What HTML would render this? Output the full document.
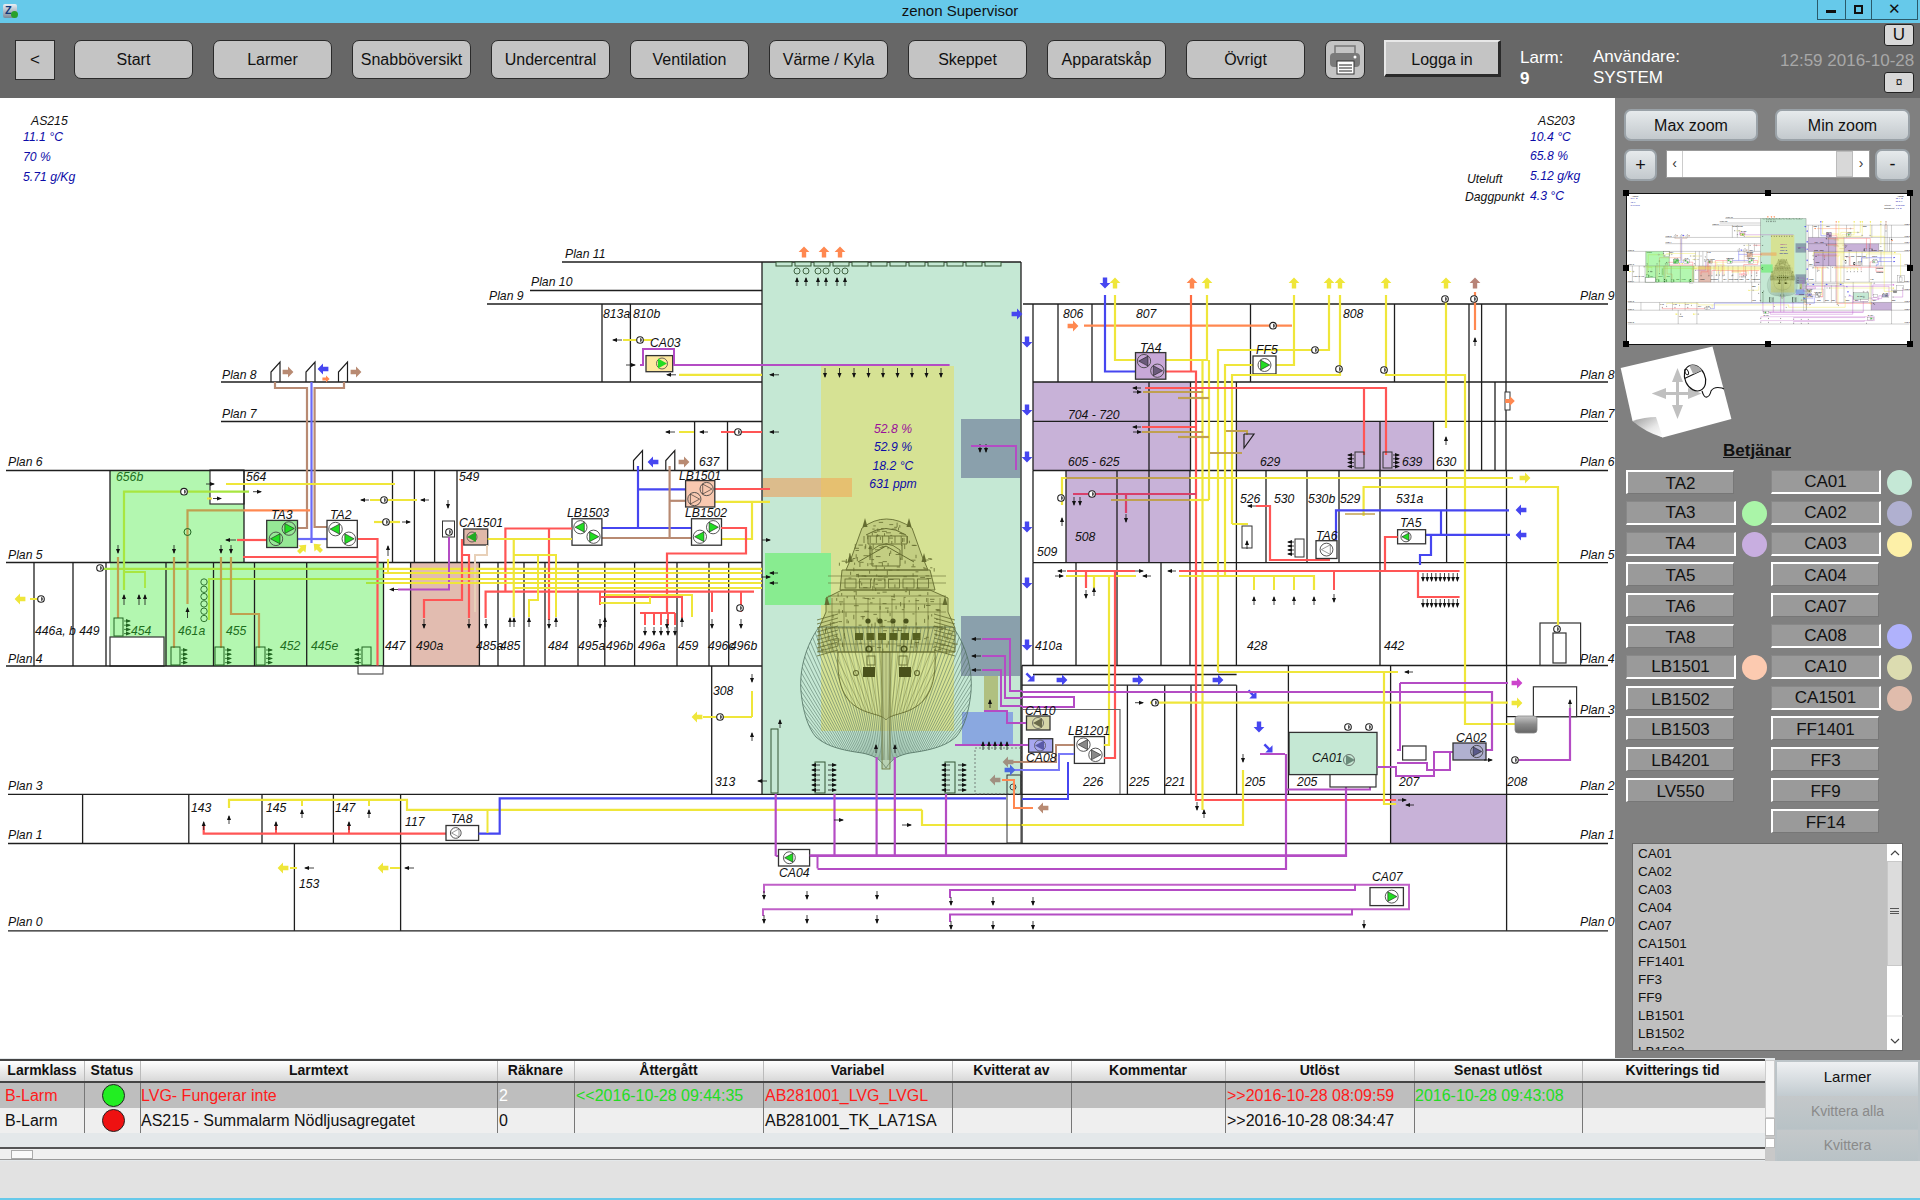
<!DOCTYPE html><html><head><meta charset="utf-8"><style>
*{margin:0;padding:0;box-sizing:border-box}
html,body{width:1920px;height:1200px;overflow:hidden;background:#fff;font-family:"Liberation Sans", sans-serif}
.a{position:absolute}
.tb{position:absolute;left:0;top:0;width:1920px;height:23px;background:#66c9ea}
.title{position:absolute;left:0;width:1920px;top:2px;text-align:center;font-size:15px;color:#111}
.tool{position:absolute;left:0;top:23px;width:1920px;height:75px;background:#676767}
.nb{position:absolute;top:40px;width:119px;height:39px;background:#c4c4c4;border:1px solid #2a2a2a;border-radius:7px;font-size:16px;color:#111;text-align:center;line-height:38px}
.panel{position:absolute;left:1615px;top:98px;width:305px;height:962px;background:#808080}
.sb{position:absolute;width:108px;height:24px;background:#9a9a9a;font-size:17px;color:#111;text-align:center;line-height:23px;border-top:2px solid #fff;border-left:2px solid #fff;border-bottom:1px solid #777;border-right:1px solid #777}
.sb2{position:absolute;width:108px;height:24px;background:#9a9a9a;font-size:17px;color:#111;text-align:center;line-height:22px;border-bottom:2px solid #fff;border-right:2px solid #fff;border-top:1px solid #888;border-left:1px solid #888}
.dot{position:absolute;width:25px;height:25px;border-radius:50%}
.zb{position:absolute;height:32px;border-radius:7px;background:linear-gradient(#e6eaec,#c3c9cd);border:2px solid #9aa2a8;font-size:16px;color:#111;text-align:center;line-height:30px}
</style></head><body><div class="tb"><div class="title">zenon Supervisor</div></div>
<div class="a" style="left:3px;top:4px;width:14px;height:14px;border-radius:2px;background:linear-gradient(#e8eef4,#7a8a9a);"></div>
<div class="a" style="left:5px;top:4px;font-size:11px;font-weight:bold;color:#123a7a;">Z</div>
<div class="a" style="left:11px;top:11px;width:7px;height:7px;border-radius:50%;background:#2aa02a;"></div>
<div class="a" style="left:1817px;top:0;width:29px;height:20px;border:1px solid #2a5a6a;border-top:none;"></div>
<div class="a" style="left:1826px;top:10px;width:10px;height:3px;background:#111;"></div>
<div class="a" style="left:1845px;top:0;width:27px;height:20px;border:1px solid #2a5a6a;border-top:none;"></div>
<div class="a" style="left:1854px;top:5px;width:9px;height:9px;border:2px solid #111;"></div>
<div class="a" style="left:1871px;top:0;width:47px;height:20px;border:1px solid #2a5a6a;border-top:none;font-size:15px;text-align:center;line-height:18px;color:#111">&#x2715;</div>
<div class="tool"></div>
<div class="a" style="left:15px;top:40px;width:40px;height:40px;background:#c4c4c4;border:1px solid #2a2a2a;font-size:17px;text-align:center;line-height:38px;color:#111">&lt;</div>
<div class="nb" style="left:74px">Start</div>
<div class="nb" style="left:213px">Larmer</div>
<div class="nb" style="left:352px">Snabböversikt</div>
<div class="nb" style="left:491px">Undercentral</div>
<div class="nb" style="left:630px">Ventilation</div>
<div class="nb" style="left:769px">Värme / Kyla</div>
<div class="nb" style="left:908px">Skeppet</div>
<div class="nb" style="left:1047px">Apparatskåp</div>
<div class="nb" style="left:1186px">Övrigt</div>
<div class="nb" style="left:1325px;width:40px;"></div>
<svg class="a" style="left:1325px;top:40px" width="40" height="40"><rect x="10" y="6" width="20" height="8" fill="none" stroke="#777" stroke-width="1.5"/><rect x="5" y="13" width="30" height="14" rx="4" fill="#7a7a7a"/><circle cx="30" cy="17" r="1.5" fill="#fff"/><rect x="12" y="21" width="17" height="13" fill="#fff" stroke="#333" stroke-width="1"/><line x1="14" y1="25" x2="27" y2="25" stroke="#222"/><line x1="14" y1="28" x2="27" y2="28" stroke="#222"/><line x1="14" y1="31" x2="27" y2="31" stroke="#222"/></svg>
<div class="a" style="left:1384px;top:40px;width:117px;height:37px;background:#c4c4c4;border-top:2px solid #e8e8e8;border-left:2px solid #e8e8e8;border-bottom:3px solid #2a2a2a;border-right:3px solid #2a2a2a;font-size:16px;text-align:center;line-height:35px;color:#111">Logga in</div>
<div class="a" style="left:1520px;top:47px;font-size:17px;color:#fff;line-height:21px">Larm:<br><b>9</b></div>
<div class="a" style="left:1593px;top:46px;font-size:17px;color:#fff;line-height:21px">Användare:<br>SYSTEM</div>
<div class="a" style="left:1780px;top:51px;font-size:17px;color:#a8a8a8">12:59 2016-10-28</div>
<div class="a" style="left:1884px;top:24px;width:30px;height:22px;background:#d8d8d8;border:1px solid #222;border-radius:3px;font-size:17px;text-align:center;line-height:20px;color:#111">U</div>
<div class="a" style="left:1884px;top:72px;width:30px;height:21px;background:#d8d8d8;border:1px solid #222;border-radius:3px;font-size:12px;text-align:center;line-height:19px;color:#111">&#xa4;</div><div class="a" style="left:0;top:98px;width:1615px;height:962px;background:#fff"></div><svg class="a" style="left:0;top:0" width="1615" height="1058" viewBox="0 0 1615 1058" font-family='"Liberation Sans", sans-serif'><g id="dg"><rect x="762" y="262" width="259" height="532" fill="#c5e8d4" stroke="none" stroke-width="1.3"/>
<rect x="821" y="366" width="133" height="365" fill="#d6e294" stroke="none" stroke-width="1.3"/>
<rect x="110" y="470" width="134" height="92.5" fill="#b3f7b0" stroke="none" stroke-width="1.3"/>
<rect x="110" y="562.5" width="274" height="103.5" fill="#b3f7b0" stroke="none" stroke-width="1.3"/>
<rect x="110" y="637" width="54" height="29" fill="#fff" stroke="#333" stroke-width="1.2"/>
<rect x="210" y="470" width="34" height="34" fill="#fff" stroke="#333" stroke-width="1.2"/>
<rect x="410.6" y="562.5" width="68.79999999999995" height="103.5" fill="#e2bcb0" stroke="none" stroke-width="1.3"/>
<rect x="763" y="478" width="89" height="19" fill="#dcbc8c" stroke="none" stroke-width="1.3"/>
<rect x="821" y="478" width="31" height="19" fill="#e6c070" stroke="none" stroke-width="1.3"/>
<rect x="765" y="553" width="66" height="52" fill="#88ec90" stroke="none" stroke-width="1.3"/>
<rect x="961" y="419" width="59" height="59" fill="#8aa0ac" stroke="none" stroke-width="1.3"/>
<rect x="961" y="616" width="59" height="60" fill="#8aa0ac" stroke="none" stroke-width="1.3"/>
<rect x="984" y="676" width="14" height="35" fill="#b0c080" stroke="none" stroke-width="1.3"/>
<rect x="962" y="712" width="51" height="33" fill="#8aa8e0" stroke="none" stroke-width="1.3"/>
<rect x="1033" y="382" width="157.5" height="88.5" fill="#c8b2d8" stroke="none" stroke-width="1.3"/>
<rect x="1066" y="470.5" width="124" height="92.20000000000005" fill="#c8b2d8" stroke="none" stroke-width="1.3"/>
<rect x="1236.4" y="421.4" width="197.0999999999999" height="49.10000000000002" fill="#c8b2d8" stroke="none" stroke-width="1.3"/>
<rect x="1390.6" y="794" width="116.0" height="49.60000000000002" fill="#c8b2d8" stroke="none" stroke-width="1.3"/>
<rect x="1289" y="732.4" width="88" height="42.200000000000045" fill="#c5e8d4" stroke="#333" stroke-width="1.3"/>
<line x1="562" y1="262" x2="762" y2="262" stroke="#1e1e1e" stroke-width="1.3"/>
<line x1="530" y1="290.5" x2="762" y2="290.5" stroke="#1e1e1e" stroke-width="1.3"/>
<line x1="487" y1="304" x2="762" y2="304" stroke="#1e1e1e" stroke-width="1.3"/>
<line x1="1023" y1="304" x2="1608" y2="304" stroke="#1e1e1e" stroke-width="1.3"/>
<line x1="221" y1="382" x2="762" y2="382" stroke="#1e1e1e" stroke-width="1.3"/>
<line x1="1033" y1="382" x2="1608" y2="382" stroke="#1e1e1e" stroke-width="1.3"/>
<line x1="221" y1="421.5" x2="762" y2="421.5" stroke="#1e1e1e" stroke-width="1.3"/>
<line x1="1033" y1="421.4" x2="1608" y2="421.4" stroke="#1e1e1e" stroke-width="1.3"/>
<line x1="6" y1="470.5" x2="762" y2="470.5" stroke="#1e1e1e" stroke-width="1.3"/>
<line x1="1033" y1="470.5" x2="1608" y2="470.5" stroke="#1e1e1e" stroke-width="1.3"/>
<line x1="6" y1="562.5" x2="762" y2="562.5" stroke="#1e1e1e" stroke-width="1.3"/>
<line x1="1033" y1="562.7" x2="1608" y2="562.7" stroke="#1e1e1e" stroke-width="1.3"/>
<line x1="6" y1="666" x2="762" y2="666" stroke="#1e1e1e" stroke-width="1.3"/>
<line x1="1022" y1="665.5" x2="1608" y2="665.5" stroke="#1e1e1e" stroke-width="1.3"/>
<line x1="1033" y1="674.5" x2="1236.6" y2="674.5" stroke="#1e1e1e" stroke-width="1.3"/>
<line x1="1022" y1="685.2" x2="1236.6" y2="685.2" stroke="#1e1e1e" stroke-width="1.3"/>
<line x1="8" y1="794.3" x2="1608" y2="794.3" stroke="#1e1e1e" stroke-width="1.3"/>
<line x1="1506" y1="716.7" x2="1610" y2="716.7" stroke="#1e1e1e" stroke-width="1.3"/>
<line x1="8" y1="843.5" x2="1608" y2="843.5" stroke="#1e1e1e" stroke-width="1.3"/>
<line x1="8" y1="930.8" x2="1608" y2="930.8" stroke="#1e1e1e" stroke-width="1.3"/>
<line x1="762" y1="262" x2="762" y2="794" stroke="#1e1e1e" stroke-width="1.3"/>
<line x1="1021" y1="262" x2="1021" y2="794" stroke="#1e1e1e" stroke-width="1.3"/>
<line x1="762" y1="262" x2="1021" y2="262" stroke="#1e1e1e" stroke-width="1.3"/>
<text transform="translate(565,258) scale(0.94,1)" font-size="13" fill="#111" font-style="italic" text-anchor="start" font-weight="normal">Plan 11</text>
<text transform="translate(531,286) scale(0.94,1)" font-size="13" fill="#111" font-style="italic" text-anchor="start" font-weight="normal">Plan 10</text>
<text transform="translate(489,300) scale(0.94,1)" font-size="13" fill="#111" font-style="italic" text-anchor="start" font-weight="normal">Plan 9</text>
<text transform="translate(222,379) scale(0.94,1)" font-size="13" fill="#111" font-style="italic" text-anchor="start" font-weight="normal">Plan 8</text>
<text transform="translate(222,418) scale(0.94,1)" font-size="13" fill="#111" font-style="italic" text-anchor="start" font-weight="normal">Plan 7</text>
<text transform="translate(8,466) scale(0.94,1)" font-size="13" fill="#111" font-style="italic" text-anchor="start" font-weight="normal">Plan 6</text>
<text transform="translate(8,559) scale(0.94,1)" font-size="13" fill="#111" font-style="italic" text-anchor="start" font-weight="normal">Plan 5</text>
<text transform="translate(8,663) scale(0.94,1)" font-size="13" fill="#111" font-style="italic" text-anchor="start" font-weight="normal">Plan 4</text>
<text transform="translate(8,790) scale(0.94,1)" font-size="13" fill="#111" font-style="italic" text-anchor="start" font-weight="normal">Plan 3</text>
<text transform="translate(8,839) scale(0.94,1)" font-size="13" fill="#111" font-style="italic" text-anchor="start" font-weight="normal">Plan 1</text>
<text transform="translate(8,926) scale(0.94,1)" font-size="13" fill="#111" font-style="italic" text-anchor="start" font-weight="normal">Plan 0</text>
<text transform="translate(1580,300) scale(0.94,1)" font-size="13" fill="#111" font-style="italic" text-anchor="start" font-weight="normal">Plan 9</text>
<text transform="translate(1580,379) scale(0.94,1)" font-size="13" fill="#111" font-style="italic" text-anchor="start" font-weight="normal">Plan 8</text>
<text transform="translate(1580,418) scale(0.94,1)" font-size="13" fill="#111" font-style="italic" text-anchor="start" font-weight="normal">Plan 7</text>
<text transform="translate(1580,466) scale(0.94,1)" font-size="13" fill="#111" font-style="italic" text-anchor="start" font-weight="normal">Plan 6</text>
<text transform="translate(1580,559) scale(0.94,1)" font-size="13" fill="#111" font-style="italic" text-anchor="start" font-weight="normal">Plan 5</text>
<text transform="translate(1580,663) scale(0.94,1)" font-size="13" fill="#111" font-style="italic" text-anchor="start" font-weight="normal">Plan 4</text>
<text transform="translate(1580,714) scale(0.94,1)" font-size="13" fill="#111" font-style="italic" text-anchor="start" font-weight="normal">Plan 3</text>
<text transform="translate(1580,790) scale(0.94,1)" font-size="13" fill="#111" font-style="italic" text-anchor="start" font-weight="normal">Plan 2</text>
<text transform="translate(1580,839) scale(0.94,1)" font-size="13" fill="#111" font-style="italic" text-anchor="start" font-weight="normal">Plan 1</text>
<text transform="translate(1580,926) scale(0.94,1)" font-size="13" fill="#111" font-style="italic" text-anchor="start" font-weight="normal">Plan 0</text>
<line x1="110" y1="470.5" x2="110" y2="562.5" stroke="#1e1e1e" stroke-width="1.3"/>
<line x1="244" y1="470.5" x2="244" y2="562.5" stroke="#1e1e1e" stroke-width="1.3"/>
<line x1="392.5" y1="470.5" x2="392.5" y2="562.5" stroke="#1e1e1e" stroke-width="1.3"/>
<line x1="414.4" y1="470.5" x2="414.4" y2="562.5" stroke="#1e1e1e" stroke-width="1.3"/>
<line x1="434.6" y1="470.5" x2="434.6" y2="562.5" stroke="#1e1e1e" stroke-width="1.3"/>
<line x1="457" y1="470.5" x2="457" y2="562.5" stroke="#1e1e1e" stroke-width="1.3"/>
<line x1="34" y1="562.5" x2="34" y2="666" stroke="#1e1e1e" stroke-width="1.3"/>
<line x1="73" y1="562.5" x2="73" y2="666" stroke="#1e1e1e" stroke-width="1.3"/>
<line x1="106" y1="562.5" x2="106" y2="666" stroke="#1e1e1e" stroke-width="1.3"/>
<line x1="166" y1="562.5" x2="166" y2="666" stroke="#1e1e1e" stroke-width="1.3"/>
<line x1="213.5" y1="562.5" x2="213.5" y2="666" stroke="#1e1e1e" stroke-width="1.3"/>
<line x1="254.5" y1="562.5" x2="254.5" y2="666" stroke="#1e1e1e" stroke-width="1.3"/>
<line x1="306.7" y1="562.5" x2="306.7" y2="666" stroke="#1e1e1e" stroke-width="1.3"/>
<line x1="383.5" y1="562.5" x2="383.5" y2="666" stroke="#1e1e1e" stroke-width="1.3"/>
<line x1="410.6" y1="562.5" x2="410.6" y2="666" stroke="#1e1e1e" stroke-width="1.3"/>
<line x1="479.4" y1="562.5" x2="479.4" y2="666" stroke="#1e1e1e" stroke-width="1.3"/>
<line x1="498" y1="562.5" x2="498" y2="666" stroke="#1e1e1e" stroke-width="1.3"/>
<line x1="524" y1="562.5" x2="524" y2="666" stroke="#1e1e1e" stroke-width="1.3"/>
<line x1="545" y1="562.5" x2="545" y2="666" stroke="#1e1e1e" stroke-width="1.3"/>
<line x1="578" y1="562.5" x2="578" y2="666" stroke="#1e1e1e" stroke-width="1.3"/>
<line x1="604.8" y1="562.5" x2="604.8" y2="666" stroke="#1e1e1e" stroke-width="1.3"/>
<line x1="634.6" y1="562.5" x2="634.6" y2="666" stroke="#1e1e1e" stroke-width="1.3"/>
<line x1="677" y1="562.5" x2="677" y2="666" stroke="#1e1e1e" stroke-width="1.3"/>
<line x1="709" y1="562.5" x2="709" y2="666" stroke="#1e1e1e" stroke-width="1.3"/>
<line x1="728.7" y1="562.5" x2="728.7" y2="666" stroke="#1e1e1e" stroke-width="1.3"/>
<line x1="711.7" y1="666" x2="711.7" y2="794" stroke="#1e1e1e" stroke-width="1.3"/>
<line x1="602" y1="304" x2="602" y2="382" stroke="#1e1e1e" stroke-width="1.3"/>
<line x1="630.4" y1="304" x2="630.4" y2="382" stroke="#1e1e1e" stroke-width="1.3"/>
<line x1="694.6" y1="421.5" x2="694.6" y2="470.5" stroke="#1e1e1e" stroke-width="1.3"/>
<line x1="727.5" y1="421.5" x2="727.5" y2="470.5" stroke="#1e1e1e" stroke-width="1.3"/>
<line x1="82.6" y1="794.3" x2="82.6" y2="843.5" stroke="#1e1e1e" stroke-width="1.3"/>
<line x1="188.8" y1="794.3" x2="188.8" y2="843.5" stroke="#1e1e1e" stroke-width="1.3"/>
<line x1="262" y1="794.3" x2="262" y2="843.5" stroke="#1e1e1e" stroke-width="1.3"/>
<line x1="333.4" y1="794.3" x2="333.4" y2="843.5" stroke="#1e1e1e" stroke-width="1.3"/>
<line x1="400.6" y1="794.3" x2="400.6" y2="843.5" stroke="#1e1e1e" stroke-width="1.3"/>
<line x1="294.4" y1="843.5" x2="294.4" y2="930.8" stroke="#1e1e1e" stroke-width="1.3"/>
<line x1="400.6" y1="843.5" x2="400.6" y2="930.8" stroke="#1e1e1e" stroke-width="1.3"/>
<line x1="1033" y1="304" x2="1033" y2="382" stroke="#1e1e1e" stroke-width="1.3"/>
<line x1="1058" y1="304" x2="1058" y2="382" stroke="#1e1e1e" stroke-width="1.3"/>
<line x1="1092" y1="304" x2="1092" y2="382" stroke="#1e1e1e" stroke-width="1.3"/>
<line x1="1250.5" y1="304" x2="1250.5" y2="382" stroke="#1e1e1e" stroke-width="1.3"/>
<line x1="1394.5" y1="304" x2="1394.5" y2="382" stroke="#1e1e1e" stroke-width="1.3"/>
<line x1="1469" y1="304" x2="1469" y2="470.5" stroke="#1e1e1e" stroke-width="1.3"/>
<line x1="1481.6" y1="304" x2="1481.6" y2="470.5" stroke="#1e1e1e" stroke-width="1.3"/>
<line x1="1506" y1="304" x2="1506" y2="470.5" stroke="#1e1e1e" stroke-width="1.3"/>
<line x1="1495" y1="382" x2="1495" y2="470.5" stroke="#1e1e1e" stroke-width="1.3"/>
<line x1="1033" y1="382" x2="1033" y2="470.5" stroke="#1e1e1e" stroke-width="1.3"/>
<line x1="1149" y1="382" x2="1149" y2="470.5" stroke="#1e1e1e" stroke-width="1.3"/>
<line x1="1190.5" y1="382" x2="1190.5" y2="470.5" stroke="#1e1e1e" stroke-width="1.3"/>
<line x1="1236.4" y1="382" x2="1236.4" y2="470.5" stroke="#1e1e1e" stroke-width="1.3"/>
<line x1="1380" y1="421.4" x2="1380" y2="470.5" stroke="#1e1e1e" stroke-width="1.3"/>
<line x1="1433.5" y1="421.4" x2="1433.5" y2="470.5" stroke="#1e1e1e" stroke-width="1.3"/>
<line x1="1033" y1="470.5" x2="1033" y2="562.7" stroke="#1e1e1e" stroke-width="1.3"/>
<line x1="1066" y1="470.5" x2="1066" y2="562.7" stroke="#1e1e1e" stroke-width="1.3"/>
<line x1="1117" y1="470.5" x2="1117" y2="562.7" stroke="#1e1e1e" stroke-width="1.3"/>
<line x1="1149" y1="470.5" x2="1149" y2="562.7" stroke="#1e1e1e" stroke-width="1.3"/>
<line x1="1190" y1="470.5" x2="1190" y2="562.7" stroke="#1e1e1e" stroke-width="1.3"/>
<line x1="1236.4" y1="470.5" x2="1236.4" y2="562.7" stroke="#1e1e1e" stroke-width="1.3"/>
<line x1="1266" y1="470.5" x2="1266" y2="562.7" stroke="#1e1e1e" stroke-width="1.3"/>
<line x1="1307" y1="470.5" x2="1307" y2="562.7" stroke="#1e1e1e" stroke-width="1.3"/>
<line x1="1339" y1="470.5" x2="1339" y2="562.7" stroke="#1e1e1e" stroke-width="1.3"/>
<line x1="1380" y1="470.5" x2="1380" y2="562.7" stroke="#1e1e1e" stroke-width="1.3"/>
<line x1="1446.6" y1="470.5" x2="1446.6" y2="562.7" stroke="#1e1e1e" stroke-width="1.3"/>
<line x1="1506.5" y1="470.5" x2="1506.5" y2="562.7" stroke="#1e1e1e" stroke-width="1.3"/>
<line x1="1033" y1="562.7" x2="1033" y2="665.5" stroke="#1e1e1e" stroke-width="1.3"/>
<line x1="1076" y1="562.7" x2="1076" y2="665.5" stroke="#1e1e1e" stroke-width="1.3"/>
<line x1="1117" y1="562.7" x2="1117" y2="665.5" stroke="#1e1e1e" stroke-width="1.3"/>
<line x1="1161" y1="562.7" x2="1161" y2="665.5" stroke="#1e1e1e" stroke-width="1.3"/>
<line x1="1190" y1="562.7" x2="1190" y2="665.5" stroke="#1e1e1e" stroke-width="1.3"/>
<line x1="1236.4" y1="562.7" x2="1236.4" y2="665.5" stroke="#1e1e1e" stroke-width="1.3"/>
<line x1="1380" y1="562.7" x2="1380" y2="665.5" stroke="#1e1e1e" stroke-width="1.3"/>
<line x1="1506.5" y1="562.7" x2="1506.5" y2="665.5" stroke="#1e1e1e" stroke-width="1.3"/>
<line x1="1022" y1="665.5" x2="1022" y2="843.5" stroke="#1e1e1e" stroke-width="1.3"/>
<line x1="1127.4" y1="685.2" x2="1127.4" y2="794.3" stroke="#1e1e1e" stroke-width="1.3"/>
<line x1="1164.7" y1="685.2" x2="1164.7" y2="794.3" stroke="#1e1e1e" stroke-width="1.3"/>
<line x1="1191" y1="685.2" x2="1191" y2="794.3" stroke="#1e1e1e" stroke-width="1.3"/>
<line x1="1236.6" y1="685.2" x2="1236.6" y2="794.3" stroke="#1e1e1e" stroke-width="1.3"/>
<line x1="1288.4" y1="665.5" x2="1288.4" y2="794.3" stroke="#1e1e1e" stroke-width="1.3"/>
<line x1="1390.6" y1="665.5" x2="1390.6" y2="843.6" stroke="#1e1e1e" stroke-width="1.3"/>
<line x1="1506.6" y1="665.5" x2="1506.6" y2="930.8" stroke="#1e1e1e" stroke-width="1.3"/>
<rect x="1540" y="623" width="40.59999999999991" height="42.5" fill="none" stroke="#333" stroke-width="1.2"/>
<rect x="1553" y="633" width="13" height="30" fill="none" stroke="#333" stroke-width="1.2"/>
<rect x="1533.4" y="686.8" width="43.19999999999982" height="29.90000000000009" fill="#fff" stroke="#333" stroke-width="1.2"/>
<g><clipPath id="hullclip"><path d="M819,627 C806,645 799,670 801,692 C803,712 808,728 816,737 C828,748 848,751 862,753 C872,755 880,758 886,768 C892,758 900,755 910,753 C924,751 944,748 956,737 C964,728 969,712 971,692 C973,670 966,645 953,627 Z"/></clipPath><path d="M819,627 C806,645 799,670 801,692 C803,712 808,728 816,737 C828,748 848,751 862,753 C872,755 880,758 886,768 C892,758 900,755 910,753 C924,751 944,748 956,737 C964,728 969,712 971,692 C973,670 966,645 953,627 Z" fill="none" stroke="#4f6e60" stroke-width="0.8"/><g clip-path="url(#hullclip)"><path d="M839.6,781.9 L685.1,655.0 M840.4,781.0 L688.4,651.0 M841.2,780.1 L691.9,647.0 M842.0,779.2 L695.4,643.2 M842.8,778.3 L699.0,639.4 M843.7,777.5 L702.6,635.7 M844.5,776.6 L706.4,632.0 M845.4,775.8 L710.2,628.5 M846.3,775.0 L714.1,625.0 M847.2,774.2 L718.0,621.6 M848.2,773.4 L722.0,618.2 M849.1,772.7 L726.1,615.0 M850.1,772.0 L730.3,611.8 M851.0,771.2 L734.5,608.7 M852.0,770.6 L738.7,605.7 M853.0,769.9 L743.1,602.8 M854.0,769.2 L747.5,600.0 M855.1,768.6 L751.9,597.3 M856.1,768.0 L756.4,594.6 M857.1,767.4 L760.9,592.1 M858.2,766.8 L765.5,589.6 M859.3,766.3 L770.2,587.2 M860.4,765.8 L774.9,584.9 M861.5,765.3 L779.6,582.8 M862.6,764.8 L784.4,580.7 M863.7,764.3 L789.2,578.7 M864.8,763.9 L794.1,576.8 M865.9,763.5 L799.0,575.0 M867.1,763.1 L803.9,573.3 M868.2,762.7 L808.9,571.7 M869.4,762.4 L813.9,570.2 M870.5,762.0 L818.9,568.8 M871.7,761.7 L824.0,567.5 M872.9,761.5 L829.1,566.3 M874.0,761.2 L834.2,565.2 M875.2,761.0 L839.3,564.2 M876.4,760.8 L844.4,563.3 M877.6,760.6 L849.6,562.6 M878.8,760.4 L854.8,561.9 M880.0,760.3 L860.0,561.3 M881.2,760.2 L865.1,560.8 M882.4,760.1 L870.4,560.5 M883.6,760.0 L875.6,560.2 M884.8,760.0 L880.8,560.1 M887.2,760.0 L891.2,560.1 M888.4,760.0 L896.4,560.2 M889.6,760.1 L901.6,560.5 M890.8,760.2 L906.9,560.8 M892.0,760.3 L912.0,561.3 M893.2,760.4 L917.2,561.9 M894.4,760.6 L922.4,562.6 M895.6,760.8 L927.6,563.3 M896.8,761.0 L932.7,564.2 M898.0,761.2 L937.8,565.2 M899.1,761.5 L942.9,566.3 M900.3,761.7 L948.0,567.5 M901.5,762.0 L953.1,568.8 M902.6,762.4 L958.1,570.2 M903.8,762.7 L963.1,571.7 M904.9,763.1 L968.1,573.3 M906.1,763.5 L973.0,575.0 M907.2,763.9 L977.9,576.8 M908.3,764.3 L982.8,578.7 M909.4,764.8 L987.6,580.7 M910.5,765.3 L992.4,582.8 M911.6,765.8 L997.1,584.9 M912.7,766.3 L1001.8,587.2 M913.8,766.8 L1006.5,589.6 M914.9,767.4 L1011.1,592.1 M915.9,768.0 L1015.6,594.6 M916.9,768.6 L1020.1,597.3 M918.0,769.2 L1024.5,600.0 M919.0,769.9 L1028.9,602.8 M920.0,770.6 L1033.3,605.7 M921.0,771.2 L1037.5,608.7 M921.9,772.0 L1041.7,611.8 M922.9,772.7 L1045.9,615.0 M923.8,773.4 L1050.0,618.2 M924.8,774.2 L1054.0,621.6 M925.7,775.0 L1057.9,625.0 M926.6,775.8 L1061.8,628.5 M927.5,776.6 L1065.6,632.0 M928.3,777.5 L1069.4,635.7 M929.2,778.3 L1073.0,639.4 M930.0,779.2 L1076.6,643.2 M930.8,780.1 L1080.1,647.0 M931.6,781.0 L1083.6,651.0 M932.4,781.9 L1086.9,655.0" stroke="#4f6e60" stroke-width="0.55" fill="none"/></g><path d="M838,652 L935,652 C937,690 925,705 905,712 C896,715 889,716 886,720 C883,716 876,715 867,712 C847,705 836,690 838,652 Z" fill="rgba(214,226,148,0.55)" stroke="#646c30" stroke-width="0.9"/><clipPath id="bowlclip"><path d="M838,652 L935,652 C937,690 925,705 905,712 C896,715 889,716 886,720 C883,716 876,715 867,712 C847,705 836,690 838,652 Z"/></clipPath><g clip-path="url(#bowlclip)"><path d="M860.7,743.9 L767.8,685.0 M861.6,742.5 L772.2,678.5 M862.6,741.2 L776.9,672.3 M863.7,739.9 L782.0,666.3 M864.9,738.7 L787.4,660.7 M866.1,737.6 L793.1,655.3 M867.4,736.5 L799.0,650.3 M868.7,735.5 L805.3,645.6 M870.1,734.6 L811.8,641.3 M871.5,733.7 L818.6,637.3 M873.0,732.9 L825.5,633.7 M874.6,732.3 L832.7,630.6 M876.1,731.7 L840.0,627.8 M877.7,731.2 L847.4,625.4 M879.4,730.7 L855.0,623.5 M881.0,730.4 L862.7,622.0 M882.7,730.2 L870.4,620.9 M884.3,730.0 L878.2,620.2 M886.0,730.0 L886.0,620.0 M887.7,730.0 L893.8,620.2 M889.3,730.2 L901.6,620.9 M891.0,730.4 L909.3,622.0 M892.6,730.7 L917.0,623.5 M894.3,731.2 L924.6,625.4 M895.9,731.7 L932.0,627.8 M897.4,732.3 L939.3,630.6 M899.0,732.9 L946.5,633.7 M900.5,733.7 L953.4,637.3 M901.9,734.6 L960.2,641.3 M903.3,735.5 L966.7,645.6 M904.6,736.5 L973.0,650.3 M905.9,737.6 L978.9,655.3 M907.1,738.7 L984.6,660.7 M908.3,739.9 L990.0,666.3 M909.4,741.2 L995.1,672.3 M910.4,742.5 L999.8,678.5 M911.3,743.9 L1004.2,685.0" stroke="#646c30" stroke-width="0.45" fill="none"/></g><rect x="882" y="652" width="8" height="117" fill="rgba(160,170,120,0.35)" stroke="#646c30" stroke-width="0.8"/><path d="M819,652 L819,628 L826,612 L826,598 L842,590 L930,590 L948,598 L948,612 L955,628 L955,652 Z" fill="rgba(100,108,40,0.16)" stroke="#646c30" stroke-width="0.9"/><path d="M840,590 L842,570 L930,570 L935,590 Z" fill="rgba(100,108,40,0.2)" stroke="#646c30" stroke-width="0.9"/><path d="M846,570 L852,556 L862,528 Q886,510 912,528 L922,556 L928,570 Z" fill="rgba(100,108,40,0.16)" stroke="#646c30" stroke-width="0.9"/><path d="M934,614 L955,620 M934,618 L955,624 M934,622 L955,628 M934,626 L955,632 M934,630 L955,636 M934,634 L955,640 M934,638 L955,644 M934,642 L955,648 M934,646 L955,652 M934,650 L955,656" stroke="#646c30" stroke-width="0.8" fill="none"/><path d="M838,614 L817,620 M838,618 L817,624 M838,622 L817,628 M838,626 L817,632 M838,630 L817,636 M838,634 L817,640 M838,638 L817,644 M838,642 L817,648 M838,646 L817,652 M838,650 L817,656" stroke="#646c30" stroke-width="0.8" fill="none"/><path d="M862.5,527 L865,518 L867.5,527 Z" fill="#646c30"/><path d="M906.5,527 L909,518 L911.5,527 Z" fill="#646c30"/><path d="M847.5,562 L850,553 L852.5,562 Z" fill="#646c30"/><path d="M921.5,562 L924,553 L926.5,562 Z" fill="#646c30"/><path d="M824.5,605 L827,596 L829.5,605 Z" fill="#646c30"/><path d="M942.5,605 L945,596 L947.5,605 Z" fill="#646c30"/><line x1="828" y1="576" x2="946" y2="576" stroke="#646c30" stroke-width="0.6"/><line x1="828" y1="583" x2="946" y2="583" stroke="#646c30" stroke-width="0.6"/><line x1="828" y1="596" x2="946" y2="596" stroke="#646c30" stroke-width="0.6"/><line x1="828" y1="604" x2="946" y2="604" stroke="#646c30" stroke-width="0.6"/><line x1="828" y1="612" x2="946" y2="612" stroke="#646c30" stroke-width="0.6"/><line x1="828" y1="628" x2="946" y2="628" stroke="#646c30" stroke-width="0.6"/><line x1="828" y1="644" x2="946" y2="644" stroke="#646c30" stroke-width="0.6"/><line x1="832" y1="598" x2="832" y2="652" stroke="#646c30" stroke-width="0.6"/><line x1="844" y1="598" x2="844" y2="652" stroke="#646c30" stroke-width="0.6"/><line x1="856" y1="598" x2="856" y2="652" stroke="#646c30" stroke-width="0.6"/><line x1="868" y1="598" x2="868" y2="652" stroke="#646c30" stroke-width="0.6"/><line x1="880" y1="598" x2="880" y2="652" stroke="#646c30" stroke-width="0.6"/><line x1="892" y1="598" x2="892" y2="652" stroke="#646c30" stroke-width="0.6"/><line x1="904" y1="598" x2="904" y2="652" stroke="#646c30" stroke-width="0.6"/><line x1="916" y1="598" x2="916" y2="652" stroke="#646c30" stroke-width="0.6"/><line x1="928" y1="598" x2="928" y2="652" stroke="#646c30" stroke-width="0.6"/><line x1="940" y1="598" x2="940" y2="652" stroke="#646c30" stroke-width="0.6"/><circle cx="868" cy="621" r="2.6" fill="#4a521c"/><circle cx="880" cy="621" r="2.6" fill="#4a521c"/><circle cx="893" cy="621" r="2.6" fill="#4a521c"/><circle cx="906" cy="621" r="2.6" fill="#4a521c"/><rect x="855.0" y="633" width="8" height="7" fill="#56601f"/><rect x="866.5" y="633" width="8" height="7" fill="#56601f"/><rect x="878.0" y="633" width="8" height="7" fill="#56601f"/><rect x="889.5" y="633" width="8" height="7" fill="#56601f"/><rect x="901.0" y="633" width="8" height="7" fill="#56601f"/><rect x="912.5" y="633" width="8" height="7" fill="#56601f"/><rect x="863" y="667" width="12" height="10" fill="#4a521c"/><rect x="899" y="667" width="12" height="10" fill="#4a521c"/><circle cx="869" cy="649" r="2.8" fill="none" stroke="#4a521c" stroke-width="1.6"/><circle cx="904" cy="649" r="2.8" fill="none" stroke="#4a521c" stroke-width="1.6"/><circle cx="856" cy="673" r="2.5" fill="none" stroke="#646c30" stroke-width="1.2"/><circle cx="917" cy="673" r="2.5" fill="none" stroke="#646c30" stroke-width="1.2"/><rect x="867" y="656" width="8" height="9" fill="none" stroke="#646c30" stroke-width="0.9"/><rect x="899" y="656" width="8" height="9" fill="none" stroke="#646c30" stroke-width="0.9"/><path d="M866,535 Q886,522 906,535 M858,562 L886,546 L914,562 M870,545 L870,560 M902,545 L902,560 M856,576 L918,576" fill="none" stroke="#646c30" stroke-width="1"/><line x1="864.0" y1="536" x2="864.0" y2="543" stroke="#646c30" stroke-width="0.8"/><line x1="870.2" y1="536" x2="870.2" y2="543" stroke="#646c30" stroke-width="0.8"/><line x1="876.4" y1="536" x2="876.4" y2="543" stroke="#646c30" stroke-width="0.8"/><line x1="882.6" y1="536" x2="882.6" y2="543" stroke="#646c30" stroke-width="0.8"/><line x1="888.8" y1="536" x2="888.8" y2="543" stroke="#646c30" stroke-width="0.8"/><line x1="895.0" y1="536" x2="895.0" y2="543" stroke="#646c30" stroke-width="0.8"/><line x1="901.2" y1="536" x2="901.2" y2="543" stroke="#646c30" stroke-width="0.8"/><line x1="907.4" y1="536" x2="907.4" y2="543" stroke="#646c30" stroke-width="0.8"/><path d="M889.5,552.9 l0,3.1 M840.8,603.3 l0,2.0 M863.5,555.7 l5.0,0 M883.1,630.7 l3.9,0 M924.5,604.5 l0,3.6 M839.1,609.3 l0,4.3 M841.7,561.2 l4.6,0 M928.4,615.4 l0,4.1 M913.1,573.3 l0,3.3 M834.2,636.3 l2.4,0 M877.2,647.5 l3.9,0 M875.7,587.9 l0,3.1 M926.7,598.0 l0,4.0 M948.0,633.3 l4.0,0 M944.9,633.9 l0,4.7 M853.8,614.8 l0,4.5 M846.4,559.0 l0,4.6 M899.4,533.5 l3.2,0 M910.9,560.2 l4.6,0 M839.1,601.9 l4.2,0 M947.9,636.5 l0,3.5 M845.2,562.3 l3.8,0 M879.5,547.7 l3.8,0 M898.5,527.5 l0,2.9 M870.1,638.6 l0,3.4 M896.1,605.7 l0,3.7 M886.9,644.3 l0,3.3 M870.2,552.9 l0,4.9 M838.1,593.3 l0,3.2 M889.3,524.6 l3.9,0 M882.5,603.6 l4.0,0 M912.4,613.9 l2.1,0 M936.0,609.9 l2.8,0 M867.7,599.0 l3.1,0 M896.6,570.0 l2.9,0 M830.4,622.4 l0,3.7 M859.2,562.3 l4.4,0 M881.6,546.4 l4.1,0 M869.5,563.9 l4.5,0 M844.3,633.2 l0,3.0 M879.7,637.0 l2.7,0 M856.2,590.9 l0,4.4 M871.2,545.9 l0,4.4 M867.3,626.8 l2.4,0 M858.6,625.2 l3.0,0 M877.9,576.6 l4.8,0 M897.1,522.6 l0,4.6 M926.5,578.5 l4.8,0 M924.6,618.9 l0,4.0 M871.4,559.6 l2.7,0 M864.5,598.5 l4.4,0 M911.4,639.5 l0,4.8 M896.1,639.0 l0,2.0 M873.2,544.3 l0,4.0 M925.5,575.8 l3.8,0 M916.0,554.8 l0,3.4 M853.8,567.7 l0,3.6 M904.7,544.3 l0,4.8 M825.5,629.1 l0,3.9 M877.8,528.5 l0,2.8 M883.6,577.0 l4.3,0 M872.3,529.1 l2.4,0 M935.1,648.7 l0,2.3 M867.8,563.1 l0,3.1 M872.0,598.3 l2.6,0 M888.9,538.1 l4.1,0 M872.3,532.4 l0,3.1 M871.8,623.7 l0,4.4 M874.5,578.1 l0,3.5 M903.5,576.7 l3.4,0 M904.9,591.7 l2.2,0 M920.2,577.4 l4.8,0 M924.0,638.7 l2.8,0 M902.5,538.0 l0,4.0 M906.0,625.0 l0,4.2 M890.2,535.4 l2.0,0 M832.4,622.7 l2.3,0 M844.7,636.5 l0,2.1 M904.0,537.8 l0,4.0 M896.8,645.8 l4.4,0 M887.3,621.8 l4.1,0 M936.0,619.4 l2.2,0 M918.5,595.3 l2.7,0 M895.6,554.5 l4.3,0 M874.6,569.8 l3.1,0 M886.0,532.8 l4.9,0 M847.0,619.2 l0,4.1 M887.8,609.6 l0,3.5 M840.2,638.7 l0,2.3 M888.3,641.2 l0,3.3 M870.3,546.2 l0,2.6 M859.9,562.9 l0,4.1 M905.1,560.5 l0,3.2 M862.5,598.0 l2.7,0 M875.4,584.3 l2.5,0 M913.2,563.9 l0,2.4 M894.9,584.3 l0,3.4 M893.0,628.8 l0,3.4 M873.4,633.4 l0,4.2 M861.7,582.8 l0,2.7 M935.5,609.8 l4.6,0 M869.5,546.7 l0,2.6 M936.6,633.6 l0,2.8 M878.5,562.7 l4.2,0 M901.3,534.0 l2.9,0 M903.6,597.4 l2.0,0 M884.7,578.7 l0,2.6 M871.1,646.2 l3.6,0 M900.6,557.7 l0,2.3 M832.9,640.1 l4.8,0 M916.2,622.4 l0,2.9 M918.5,607.0 l0,2.8 M909.7,647.0 l3.6,0 M872.7,586.2 l0,4.2 M854.4,595.6 l0,3.9 M911.7,545.3 l4.0,0 M837.9,643.1 l0,3.0 M891.6,599.7 l3.9,0 M854.6,562.6 l0,2.2 M891.0,620.1 l4.2,0 M875.9,556.6 l4.6,0 M863.2,587.6 l4.3,0 M876.2,565.3 l0,3.6 M923.0,567.9 l2.3,0 M867.7,535.0 l0,4.3 M865.1,546.0 l0,3.2 M916.4,628.0 l3.8,0 M858.4,573.8 l0,3.6 M868.2,548.3 l4.3,0 M933.2,626.4 l4.8,0 M894.2,593.8 l0,3.9 M864.2,611.3 l4.6,0 M909.2,600.2 l0,2.0 M885.1,608.1 l3.6,0 M888.0,547.1 l0,2.1 M880.1,606.0 l0,3.7 M838.6,638.0 l0,4.4 M881.0,528.6 l2.7,0 M927.8,592.1 l0,3.0 M846.0,612.3 l0,4.6 M914.9,642.5 l4.2,0 M938.3,626.9 l4.6,0 M884.3,620.4 l2.3,0 M873.3,532.1 l2.5,0 M890.1,612.9 l0,3.3 M882.6,561.6 l4.3,0 M912.5,545.5 l4.2,0 M888.6,570.2 l3.8,0 M878.8,522.4 l4.3,0 M858.6,581.8 l2.6,0 M856.1,574.5 l2.1,0 M885.4,543.9 l2.2,0 M877.7,580.2 l4.1,0 M876.7,574.4 l0,2.1 M855.5,550.5 l3.4,0 M870.1,602.9 l2.4,0 M860.6,616.6 l4.4,0 M859.2,643.3 l2.7,0 M901.7,627.9 l3.0,0 M936.9,610.7 l3.8,0 M873.3,525.9 l2.5,0 M891.7,529.0 l4.7,0 M882.8,648.6 l0,4.4 M823.1,644.2 l0,2.9 M830.1,645.1 l0,2.9 M880.4,536.9 l0,3.0 M842.5,642.7 l0,4.2 M892.6,630.6 l4.8,0 M861.6,575.9 l4.3,0 M857.3,557.0 l0,4.2 M873.4,614.4 l3.5,0 M833.0,614.4 l0,3.4 M842.5,610.1 l0,2.7 M925.9,605.5 l4.6,0 M916.4,638.6 l3.0,0 M881.9,531.4 l4.9,0 M847.2,596.0 l0,2.2 M849.8,553.3 l0,2.5 M836.7,598.1 l0,2.7 M890.7,550.6 l0,3.3 M915.5,600.6 l3.6,0 M858.4,545.1 l4.5,0 M899.8,525.1 l0,2.6 M884.5,533.2 l0,2.7 M900.6,602.0 l0,4.3 M896.8,567.0 l3.3,0 M897.7,630.6 l4.4,0 M882.5,592.1 l4.2,0 M884.4,567.0 l0,2.2 M877.2,617.6 l0,3.9 M874.9,549.8 l5.0,0 M848.6,578.0 l2.7,0 M916.3,643.0 l0,4.6 M930.4,601.6 l3.6,0 M940.7,645.2 l4.8,0 M875.1,622.5 l0,5.0 M926.1,560.0 l2.6,0 M862.9,615.9 l0,3.6 M894.2,527.3 l2.8,0 M911.3,566.8 l4.2,0 M876.3,535.4 l3.2,0 M901.7,541.9 l0,4.1 M938.3,649.4 l3.1,0 M882.4,562.6 l0,3.6 M924.2,568.8 l2.9,0 M925.8,637.3 l2.9,0 M826.7,626.9 l0,2.4 M853.6,591.7 l2.2,0 M882.0,622.1 l0,4.9 M821.4,649.3 l2.6,0 M871.4,578.2 l0,2.2 M877.3,534.2 l0,2.7 M864.4,576.4 l2.1,0 M904.2,603.6 l0,4.7 M856.2,554.2 l0,4.3 M915.8,588.1 l3.7,0 M855.3,543.9 l0,3.9 M881.7,639.8 l0,4.0 M898.5,627.8 l0,3.2 M865.7,544.2 l0,4.1 M877.0,593.1 l3.1,0 M880.3,626.4 l4.9,0 M888.1,562.9 l0,3.2 M939.2,629.6 l3.8,0 M891.0,596.7 l3.5,0 M931.7,614.2 l0,2.3 M887.3,570.3 l0,4.7 M853.9,605.7 l4.8,0 M915.5,571.8 l2.9,0 M946.4,645.5 l3.0,0 M852.8,558.7 l0,2.8 M874.5,532.3 l2.6,0 M909.4,590.4 l0,4.5 M825.5,628.3 l0,2.8 M876.7,531.0 l3.4,0 M841.7,593.0 l0,2.7 M909.4,540.7 l0,2.5 M901.8,609.7 l2.4,0 M848.4,620.7 l0,2.6 M828.2,635.7 l0,4.9 M850.6,571.7 l0,3.2 M852.9,558.5 l2.4,0 M930.2,567.8 l2.2,0 M953.0,644.1 l4.9,0 M934.2,568.1 l0,3.5 M839.4,562.7 l0,3.0 M894.2,623.7 l0,3.4 M889.1,579.5 l4.5,0 M930.0,599.3 l4.5,0 M932.7,647.2 l2.5,0 M854.1,548.3 l4.9,0 M836.7,635.4 l0,2.0 M944.9,625.2 l0,4.1 M838.4,621.6 l3.6,0 M891.8,541.0 l0,3.0 M869.6,570.6 l0,3.1 M946.7,649.5 l0,4.6 M929.4,559.3 l2.8,0 M906.9,587.1 l0,3.0 M928.1,558.7 l3.4,0" stroke="#646c30" stroke-width="0.8" fill="none"/><rect x="845.0" y="579" width="11" height="9" fill="none" stroke="#646c30" stroke-width="0.8"/><rect x="859.5" y="579" width="11" height="9" fill="none" stroke="#646c30" stroke-width="0.8"/><rect x="874.0" y="579" width="11" height="9" fill="none" stroke="#646c30" stroke-width="0.8"/><rect x="888.5" y="579" width="11" height="9" fill="none" stroke="#646c30" stroke-width="0.8"/><rect x="903.0" y="579" width="11" height="9" fill="none" stroke="#646c30" stroke-width="0.8"/><rect x="917.5" y="579" width="11" height="9" fill="none" stroke="#646c30" stroke-width="0.8"/><path d="M868,536 L907,536 L907,544 L868,544 Z M872,550 Q886,538 900,550 L900,566 L872,566 Z" fill="none" stroke="#646c30" stroke-width="0.9"/></g>
<polyline points="271,382 271,372 280,362 280,382" fill="none" stroke="#1e1e1e" stroke-width="1.2"/>
<polyline points="306,382 306,372 315,362 315,382" fill="none" stroke="#1e1e1e" stroke-width="1.2"/>
<polyline points="338.5,382 338.5,372 347.5,362 347.5,382" fill="none" stroke="#1e1e1e" stroke-width="1.2"/>
<polygon points="293.4,372.0 288.0,366.6 288.0,369.8 282.6,369.8 282.6,374.2 288.0,374.2 288.0,377.4" fill="#b88a72"/>
<polygon points="361.4,372.0 356.0,366.6 356.0,369.8 350.6,369.8 350.6,374.2 356.0,374.2 356.0,377.4" fill="#b88a72"/>
<polygon points="317.6,369.0 323.0,363.6 323.0,366.8 328.4,366.8 328.4,371.2 323.0,371.2 323.0,374.4" fill="#4646f0"/>
<polygon points="329.6,379.0 326.0,375.4 326.0,377.5 322.4,377.5 322.4,380.5 326.0,380.5 326.0,382.6" fill="#ff8850"/>
<polyline points="275,382 275,388 307,388 307,528 297.5,528" fill="none" stroke="#b88a72" stroke-width="2.2"/>
<polyline points="344,382 344,388 314.6,388 314.6,527 327,527" fill="none" stroke="#b88a72" stroke-width="2.2"/>
<polyline points="311.5,382 311.5,543" fill="none" stroke="#6a6af8" stroke-width="2.2"/>
<polyline points="297.5,539 327,539" fill="none" stroke="#6a6af8" stroke-width="2.2"/>
<polyline points="187.5,604 187.5,510.4 244,510.4" fill="none" stroke="#c0a050" stroke-width="2.2"/>
<polyline points="244,510.4 310,510.4" fill="none" stroke="#ff8850" stroke-width="2.2"/>
<polyline points="237,540 266.7,540" fill="none" stroke="#ff5555" stroke-width="2.2"/>
<line x1="226" y1="540" x2="236" y2="540" stroke="#111" stroke-width="0.8"/>
<polygon points="225,540 230,538 230,542" fill="#111"/>
<polyline points="243,557 377.5,557" fill="none" stroke="#ff5555" stroke-width="2.2"/>
<polyline points="357,539 377.5,539 377.5,666" fill="none" stroke="#ff5555" stroke-width="2.2"/>
<polyline points="124,590 124,491.7 249,491.7" fill="none" stroke="#a8e640" stroke-width="2.2"/>
<line x1="253" y1="491.7" x2="261" y2="491.7" stroke="#111" stroke-width="0.8"/>
<polygon points="262,491.7 257,489.7 257,493.7" fill="#111"/>
<polyline points="226,484 395,484" fill="none" stroke="#efe63a" stroke-width="2.2"/>
<line x1="206" y1="484" x2="214" y2="484" stroke="#111" stroke-width="0.8"/>
<polygon points="215,484 210,482 210,486" fill="#111"/>
<line x1="213" y1="498.5" x2="221" y2="498.5" stroke="#111" stroke-width="0.8"/>
<polygon points="222,498.5 217,496.5 217,500.5" fill="#111"/>
<polyline points="207,498.5 212,498.5" fill="none" stroke="#efe63a" stroke-width="2"/>
<circle cx="184" cy="491.7" r="3.3" fill="#fff" stroke="#222" stroke-width="1.1"/><path d="M184,489.7 A2,2 0 0,1 184,493.7 Z" fill="#555"/>
<circle cx="187.5" cy="532" r="3.5" fill="none" stroke="#226622" stroke-width="1"/>
<rect x="266.7" y="520.4" width="30.80000000000001" height="27.100000000000023" fill="#96e896" stroke="#333" stroke-width="1.3"/>
<circle cx="288.876" cy="528.53" r="6.775000000000006" fill="none" stroke="#444" stroke-width="0.9"/>
<polygon points="294.3,528.5 284.8,523.4 284.8,533.6" fill="#22dd22" stroke="#1e1e1e" stroke-width="0.6"/>
<circle cx="275.94" cy="538.828" r="6.775000000000006" fill="none" stroke="#444" stroke-width="0.9"/>
<polygon points="270.5,538.8 280.0,533.7 280.0,543.9" fill="#22dd22" stroke="#1e1e1e" stroke-width="0.6"/>
<rect x="327" y="520.4" width="30.30000000000001" height="27.100000000000023" fill="#fff" stroke="#333" stroke-width="1.3"/>
<circle cx="335.484" cy="529.072" r="6.775000000000006" fill="none" stroke="#444" stroke-width="0.9"/>
<polygon points="330.1,529.1 339.5,524.0 339.5,534.2" fill="#22dd22" stroke="#1e1e1e" stroke-width="0.6"/>
<circle cx="348.81600000000003" cy="538.828" r="6.775000000000006" fill="none" stroke="#444" stroke-width="0.9"/>
<polygon points="354.2,538.8 344.8,533.7 344.8,543.9" fill="#22dd22" stroke="#1e1e1e" stroke-width="0.6"/>
<g transform="rotate(45 302 549)"><polygon points="302,543 307,549 304,549 304,554 300,554 300,549 297,549" fill="#efe63a"/></g><g transform="rotate(-45 318 548)"><polygon points="318,542 323,548 320,548 320,553 316,553 316,548 313,548" fill="#efe63a"/></g>
<polyline points="370,500 417,500" fill="none" stroke="#efe63a" stroke-width="2.2"/>
<circle cx="384" cy="500" r="3.3" fill="#fff" stroke="#222" stroke-width="1.1"/><path d="M384,498 A2,2 0 0,1 384,502 Z" fill="#555"/>
<line x1="361" y1="500" x2="369" y2="500" stroke="#111" stroke-width="0.8"/>
<polygon points="360,500 365,498 365,502" fill="#111"/>
<line x1="421" y1="500" x2="429" y2="500" stroke="#111" stroke-width="0.8"/>
<polygon points="420,500 425,498 425,502" fill="#111"/>
<polyline points="374,522 400,522" fill="none" stroke="#efe63a" stroke-width="2.2"/>
<circle cx="386" cy="522" r="3.3" fill="#fff" stroke="#222" stroke-width="1.1"/><path d="M386,520 A2,2 0 0,1 386,524 Z" fill="#555"/>
<line x1="402" y1="522" x2="410" y2="522" stroke="#111" stroke-width="0.8"/>
<polygon points="411,522 406,520 406,524" fill="#111"/>
<line x1="388" y1="556" x2="388" y2="546" stroke="#111" stroke-width="0.8"/>
<polygon points="388,545 386,550 390,550" fill="#111"/>
<polyline points="100,568.8 383,568.8" fill="none" stroke="#a8e640" stroke-width="2.2"/>
<polyline points="383,568.8 762,568.8" fill="none" stroke="#efe63a" stroke-width="2.2"/>
<polyline points="209,620 209,579 400,579" fill="none" stroke="#a8e640" stroke-width="2.2"/>
<polyline points="124,572 145,572 145,588" fill="none" stroke="#a8e640" stroke-width="1.8"/>
<line x1="124" y1="605" x2="124" y2="595" stroke="#111" stroke-width="0.8"/>
<polygon points="124,594 122,599 126,599" fill="#111"/>
<line x1="139" y1="605" x2="139" y2="595" stroke="#111" stroke-width="0.8"/>
<polygon points="139,594 137,599 141,599" fill="#111"/>
<line x1="145" y1="605" x2="145" y2="595" stroke="#111" stroke-width="0.8"/>
<polygon points="145,594 143,599 147,599" fill="#111"/>
<circle cx="100" cy="568" r="3.3" fill="#fff" stroke="#222" stroke-width="1.1"/><path d="M100,566 A2,2 0 0,1 100,570 Z" fill="#555"/>
<polyline points="118,557 118,618" fill="none" stroke="#c0a050" stroke-width="2.2"/>
<polyline points="174,557 174,648" fill="none" stroke="#c0a050" stroke-width="2.2"/>
<polyline points="221,557 221,648" fill="none" stroke="#c0a050" stroke-width="2.2"/>
<polyline points="231,557 231,614 259,614 259,648" fill="none" stroke="#c0a050" stroke-width="2.2"/>
<line x1="118" y1="545" x2="118" y2="553" stroke="#111" stroke-width="0.8"/>
<polygon points="118,554 116,549 120,549" fill="#111"/>
<line x1="174" y1="545" x2="174" y2="553" stroke="#111" stroke-width="0.8"/>
<polygon points="174,554 172,549 176,549" fill="#111"/>
<line x1="221" y1="545" x2="221" y2="553" stroke="#111" stroke-width="0.8"/>
<polygon points="221,554 219,549 223,549" fill="#111"/>
<line x1="231" y1="545" x2="231" y2="553" stroke="#111" stroke-width="0.8"/>
<polygon points="231,554 229,549 233,549" fill="#111"/>
<line x1="187.5" y1="618" x2="187.5" y2="608" stroke="#111" stroke-width="0.8"/>
<polygon points="187.5,607 185.5,612 189.5,612" fill="#111"/>
<circle cx="204" cy="582.0" r="3.2" fill="none" stroke="#226622" stroke-width="0.9"/>
<circle cx="204" cy="589.3" r="3.2" fill="none" stroke="#226622" stroke-width="0.9"/>
<circle cx="204" cy="596.6" r="3.2" fill="none" stroke="#226622" stroke-width="0.9"/>
<circle cx="204" cy="603.9" r="3.2" fill="none" stroke="#226622" stroke-width="0.9"/>
<circle cx="204" cy="611.2" r="3.2" fill="none" stroke="#226622" stroke-width="0.9"/>
<circle cx="204" cy="618.5" r="3.2" fill="none" stroke="#226622" stroke-width="0.9"/>
<rect x="114" y="618" width="9" height="18" fill="none" stroke="#226622" stroke-width="1"/>
<line x1="124" y1="621.0" x2="130" y2="621.0" stroke="#226622" stroke-width="0.8"/>
<polygon points="131,621.0 126,619.0 126,623.0" fill="#226622"/>
<line x1="124" y1="625.2" x2="130" y2="625.2" stroke="#226622" stroke-width="0.8"/>
<polygon points="131,625.2 126,623.2 126,627.2" fill="#226622"/>
<line x1="124" y1="629.4" x2="130" y2="629.4" stroke="#226622" stroke-width="0.8"/>
<polygon points="131,629.4 126,627.4 126,631.4" fill="#226622"/>
<line x1="124" y1="633.6" x2="130" y2="633.6" stroke="#226622" stroke-width="0.8"/>
<polygon points="131,633.6 126,631.6 126,635.6" fill="#226622"/>
<rect x="171" y="647" width="9" height="18" fill="none" stroke="#226622" stroke-width="1"/>
<line x1="181" y1="650.0" x2="187" y2="650.0" stroke="#226622" stroke-width="0.8"/>
<polygon points="188,650.0 183,648.0 183,652.0" fill="#226622"/>
<line x1="181" y1="654.2" x2="187" y2="654.2" stroke="#226622" stroke-width="0.8"/>
<polygon points="188,654.2 183,652.2 183,656.2" fill="#226622"/>
<line x1="181" y1="658.4" x2="187" y2="658.4" stroke="#226622" stroke-width="0.8"/>
<polygon points="188,658.4 183,656.4 183,660.4" fill="#226622"/>
<line x1="181" y1="662.6" x2="187" y2="662.6" stroke="#226622" stroke-width="0.8"/>
<polygon points="188,662.6 183,660.6 183,664.6" fill="#226622"/>
<rect x="215" y="647" width="9" height="18" fill="none" stroke="#226622" stroke-width="1"/>
<line x1="225" y1="650.0" x2="231" y2="650.0" stroke="#226622" stroke-width="0.8"/>
<polygon points="232,650.0 227,648.0 227,652.0" fill="#226622"/>
<line x1="225" y1="654.2" x2="231" y2="654.2" stroke="#226622" stroke-width="0.8"/>
<polygon points="232,654.2 227,652.2 227,656.2" fill="#226622"/>
<line x1="225" y1="658.4" x2="231" y2="658.4" stroke="#226622" stroke-width="0.8"/>
<polygon points="232,658.4 227,656.4 227,660.4" fill="#226622"/>
<line x1="225" y1="662.6" x2="231" y2="662.6" stroke="#226622" stroke-width="0.8"/>
<polygon points="232,662.6 227,660.6 227,664.6" fill="#226622"/>
<rect x="256" y="647" width="9" height="18" fill="none" stroke="#226622" stroke-width="1"/>
<line x1="266" y1="650.0" x2="272" y2="650.0" stroke="#226622" stroke-width="0.8"/>
<polygon points="273,650.0 268,648.0 268,652.0" fill="#226622"/>
<line x1="266" y1="654.2" x2="272" y2="654.2" stroke="#226622" stroke-width="0.8"/>
<polygon points="273,654.2 268,652.2 268,656.2" fill="#226622"/>
<line x1="266" y1="658.4" x2="272" y2="658.4" stroke="#226622" stroke-width="0.8"/>
<polygon points="273,658.4 268,656.4 268,660.4" fill="#226622"/>
<line x1="266" y1="662.6" x2="272" y2="662.6" stroke="#226622" stroke-width="0.8"/>
<polygon points="273,662.6 268,660.6 268,664.6" fill="#226622"/>
<rect x="362" y="647" width="9" height="18" fill="none" stroke="#226622" stroke-width="1"/>
<line x1="355" y1="650.0" x2="361" y2="650.0" stroke="#226622" stroke-width="0.8"/>
<polygon points="354,650.0 359,648.0 359,652.0" fill="#226622"/>
<line x1="355" y1="654.2" x2="361" y2="654.2" stroke="#226622" stroke-width="0.8"/>
<polygon points="354,654.2 359,652.2 359,656.2" fill="#226622"/>
<line x1="355" y1="658.4" x2="361" y2="658.4" stroke="#226622" stroke-width="0.8"/>
<polygon points="354,658.4 359,656.4 359,660.4" fill="#226622"/>
<line x1="355" y1="662.6" x2="361" y2="662.6" stroke="#226622" stroke-width="0.8"/>
<polygon points="354,662.6 359,660.6 359,664.6" fill="#226622"/>
<rect x="358" y="666" width="25" height="8" fill="#fff" stroke="#333" stroke-width="1"/>
<polygon points="14.6,599.0 20.0,593.6 20.0,596.8 25.4,596.8 25.4,601.2 20.0,601.2 20.0,604.4" fill="#efe63a"/>
<polyline points="30,599 41,599" fill="none" stroke="#efe63a" stroke-width="2"/>
<circle cx="41" cy="599" r="3.3" fill="#fff" stroke="#222" stroke-width="1.1"/><path d="M41,597 A2,2 0 0,1 41,601 Z" fill="#555"/>
<polyline points="229,808 229,799.8 407,799.8 407,809.8 922,809.8" fill="none" stroke="#efe63a" stroke-width="2.2"/>
<polyline points="302,800 302,806" fill="none" stroke="#efe63a" stroke-width="2"/>
<line x1="302" y1="818" x2="302" y2="810" stroke="#111" stroke-width="0.8"/>
<polygon points="302,809 300,814 304,814" fill="#111"/>
<polyline points="369,800 369,806" fill="none" stroke="#efe63a" stroke-width="2"/>
<line x1="369" y1="818" x2="369" y2="810" stroke="#111" stroke-width="0.8"/>
<polygon points="369,809 367,814 371,814" fill="#111"/>
<line x1="229" y1="824" x2="229" y2="816" stroke="#111" stroke-width="0.8"/>
<polygon points="229,815 227,820 231,820" fill="#111"/>
<polyline points="203.7,826 203.7,833.6 446,833.6" fill="none" stroke="#ff5555" stroke-width="2.2"/>
<polyline points="276,826 276,833.6" fill="none" stroke="#ff5555" stroke-width="2"/>
<polyline points="349,826 349,833.6" fill="none" stroke="#ff5555" stroke-width="2"/>
<line x1="203.7" y1="830" x2="203.7" y2="822" stroke="#111" stroke-width="0.8"/>
<polygon points="203.7,821 201.7,826 205.7,826" fill="#111"/>
<line x1="276" y1="830" x2="276" y2="822" stroke="#111" stroke-width="0.8"/>
<polygon points="276,821 274,826 278,826" fill="#111"/>
<line x1="349" y1="830" x2="349" y2="822" stroke="#111" stroke-width="0.8"/>
<polygon points="349,821 347,826 351,826" fill="#111"/>
<rect x="446" y="825.5" width="32.60000000000002" height="14.899999999999977" fill="#fff" stroke="#333" stroke-width="1.3"/>
<circle cx="455.78000000000003" cy="832.95" r="5.363999999999992" fill="none" stroke="#444" stroke-width="0.9"/>
<polygon points="451.5,833.0 459.0,828.9 459.0,837.0" fill="none" stroke="#555" stroke-width="0.6"/>
<polyline points="478.6,833.6 499.7,833.6 499.7,798.4 1006,798.4" fill="none" stroke="#4646f0" stroke-width="2.2"/>
<polyline points="487.5,809.8 487.5,833" fill="none" stroke="#efe63a" stroke-width="2"/>
<polygon points="277.6,868.0 283.0,862.6 283.0,865.8 288.4,865.8 288.4,870.2 283.0,870.2 283.0,873.4" fill="#efe63a"/>
<polyline points="290,868 297,868" fill="none" stroke="#efe63a" stroke-width="2"/>
<line x1="305" y1="868" x2="314" y2="868" stroke="#111" stroke-width="0.8"/>
<polygon points="304,868 309,866 309,870" fill="#111"/>
<polygon points="377.6,868.0 383.0,862.6 383.0,865.8 388.4,865.8 388.4,870.2 383.0,870.2 383.0,873.4" fill="#efe63a"/>
<polyline points="390,868 400,868" fill="none" stroke="#efe63a" stroke-width="2"/>
<line x1="405" y1="868" x2="414" y2="868" stroke="#111" stroke-width="0.8"/>
<polygon points="404,868 409,866 409,870" fill="#111"/>
<polygon points="691.6,717.0 697.0,711.6 697.0,714.8 702.4,714.8 702.4,719.2 697.0,719.2 697.0,722.4" fill="#efe63a"/>
<polyline points="703,717 752,717" fill="none" stroke="#efe63a" stroke-width="2"/>
<circle cx="720" cy="717" r="3.3" fill="#fff" stroke="#222" stroke-width="1.1"/><path d="M720,715 A2,2 0 0,1 720,719 Z" fill="#555"/>
<polyline points="752,691 752,717" fill="none" stroke="#efe63a" stroke-width="2"/>
<line x1="752" y1="674" x2="752" y2="682" stroke="#111" stroke-width="0.8"/>
<polygon points="752,683 750,678 754,678" fill="#111"/>
<line x1="752" y1="741" x2="752" y2="733" stroke="#111" stroke-width="0.8"/>
<polygon points="752,732 750,737 754,737" fill="#111"/>
<line x1="758" y1="781" x2="767" y2="781" stroke="#111" stroke-width="0.8"/>
<polygon points="757,781 762,779 762,783" fill="#111"/>
<rect x="646" y="355.6" width="26.700000000000045" height="16.099999999999966" fill="#fde9a0" stroke="#333" stroke-width="1.3"/>
<circle cx="662" cy="363.5" r="5.5" fill="none" stroke="#444" stroke-width="0.8"/>
<polygon points="667,363.5 658,358.5 658,368.5" fill="#22dd22"/>
<polyline points="640,365 643,365 643,349 674,349 674,365 949.6,365" fill="none" stroke="#b44cc4" stroke-width="2"/>
<polyline points="679,374.8 762,374.8" fill="none" stroke="#efe63a" stroke-width="2.2"/>
<line x1="667" y1="374.8" x2="676" y2="374.8" stroke="#111" stroke-width="0.8"/>
<polygon points="666,374.8 671,372.8 671,376.8" fill="#111"/>
<line x1="770" y1="374.8" x2="779" y2="374.8" stroke="#111" stroke-width="0.8"/>
<polygon points="769,374.8 774,372.8 774,376.8" fill="#111"/>
<polyline points="623,340 653,340" fill="none" stroke="#efe63a" stroke-width="2"/>
<circle cx="640" cy="340" r="3.3" fill="#fff" stroke="#222" stroke-width="1.1"/><path d="M640,338 A2,2 0 0,1 640,342 Z" fill="#555"/>
<line x1="613" y1="340" x2="622" y2="340" stroke="#111" stroke-width="0.8"/>
<polygon points="612,340 617,338 617,342" fill="#111"/>
<line x1="626" y1="365" x2="635" y2="365" stroke="#111" stroke-width="0.8"/>
<polygon points="636,365 631,363 631,367" fill="#111"/>
<polyline points="721,432 762,432" fill="none" stroke="#ff5555" stroke-width="2.2"/>
<circle cx="738" cy="432" r="3.3" fill="#fff" stroke="#222" stroke-width="1.1"/><path d="M738,430 A2,2 0 0,1 738,434 Z" fill="#555"/>
<polyline points="679,432 694,432" fill="none" stroke="#efe63a" stroke-width="2"/>
<line x1="666" y1="432" x2="675" y2="432" stroke="#111" stroke-width="0.8"/>
<polygon points="665,432 670,430 670,434" fill="#111"/>
<line x1="700" y1="432" x2="708" y2="432" stroke="#111" stroke-width="0.8"/>
<polygon points="699,432 704,430 704,434" fill="#111"/>
<line x1="770" y1="432" x2="779" y2="432" stroke="#111" stroke-width="0.8"/>
<polygon points="769,432 774,430 774,434" fill="#111"/>
<polyline points="633.5,470.5 633.5,460.5 642.5,450.5 642.5,470.5" fill="none" stroke="#1e1e1e" stroke-width="1.2"/>
<polyline points="665.8,470.5 665.8,460.5 674.8,450.5 674.8,470.5" fill="none" stroke="#1e1e1e" stroke-width="1.2"/>
<polygon points="647.6,462.0 653.0,456.6 653.0,459.8 658.4,459.8 658.4,464.2 653.0,464.2 653.0,467.4" fill="#4646f0"/>
<polygon points="689.4,462.0 684.0,456.6 684.0,459.8 678.6,459.8 678.6,464.2 684.0,464.2 684.0,467.4" fill="#b88a72"/>
<polyline points="638,466 638,528" fill="none" stroke="#4646f0" stroke-width="2.2"/>
<polyline points="638,489.4 685.6,489.4" fill="none" stroke="#4646f0" stroke-width="2.2"/>
<polyline points="602,528 691.5,528" fill="none" stroke="#4646f0" stroke-width="2.2"/>
<polyline points="669.6,466 669.6,538" fill="none" stroke="#b88a72" stroke-width="2.2"/>
<polyline points="669.6,500.8 685.6,500.8" fill="none" stroke="#b88a72" stroke-width="2.2"/>
<polyline points="602,538 691.5,538" fill="none" stroke="#b88a72" stroke-width="2.2"/>
<polyline points="714.8,489 770,489" fill="none" stroke="#ff5555" stroke-width="2.2"/>
<polyline points="714.8,501.9 770,501.9" fill="none" stroke="#efe63a" stroke-width="2.2"/>
<polyline points="752,502 752,539 721,539" fill="none" stroke="#efe63a" stroke-width="2.2"/>
<rect x="685.6" y="480.6" width="29.199999999999932" height="26.399999999999977" fill="#f8c8b0" stroke="#333" stroke-width="1.3"/>
<circle cx="706.624" cy="489.048" r="6.599999999999994" fill="none" stroke="#444" stroke-width="0.9"/>
<polygon points="711.9,489.0 702.7,484.1 702.7,494.0" fill="none" stroke="#1e1e1e" stroke-width="0.6"/>
<circle cx="694.36" cy="499.08" r="6.599999999999994" fill="none" stroke="#444" stroke-width="0.9"/>
<polygon points="699.6,499.1 690.4,494.1 690.4,504.0" fill="none" stroke="#1e1e1e" stroke-width="0.6"/>
<rect x="572" y="518.75" width="29.899999999999977" height="26.450000000000045" fill="#fff" stroke="#333" stroke-width="1.3"/>
<circle cx="580.372" cy="527.214" r="6.612500000000011" fill="none" stroke="#444" stroke-width="0.9"/>
<polygon points="575.1,527.2 584.3,522.3 584.3,532.2" fill="#22dd22" stroke="#1e1e1e" stroke-width="0.6"/>
<circle cx="593.528" cy="536.736" r="6.612500000000011" fill="none" stroke="#444" stroke-width="0.9"/>
<polygon points="598.8,536.7 589.6,531.8 589.6,541.7" fill="#22dd22" stroke="#1e1e1e" stroke-width="0.6"/>
<rect x="691.5" y="518.75" width="30.0" height="26.450000000000045" fill="#fff" stroke="#333" stroke-width="1.3"/>
<circle cx="713.1" cy="527.214" r="6.612500000000011" fill="none" stroke="#444" stroke-width="0.9"/>
<polygon points="718.4,527.2 709.1,522.3 709.1,532.2" fill="#22dd22" stroke="#1e1e1e" stroke-width="0.6"/>
<circle cx="699.9" cy="536.736" r="6.612500000000011" fill="none" stroke="#444" stroke-width="0.9"/>
<polygon points="694.6,536.7 703.9,531.8 703.9,541.7" fill="#22dd22" stroke="#1e1e1e" stroke-width="0.6"/>
<polyline points="572,528.5 505.4,528.5 505.4,591.7" fill="none" stroke="#ff5555" stroke-width="2.2"/>
<polyline points="549,528.5 549,620" fill="none" stroke="#ff5555" stroke-width="2.2"/>
<polyline points="721,528 746,528 746,553.5 667,553.5 667,614" fill="none" stroke="#ff5555" stroke-width="2.2"/>
<polyline points="485.6,618 485.6,591.7 754,591.7" fill="none" stroke="#ff5555" stroke-width="2.2"/>
<rect x="463.75" y="529" width="23.94999999999999" height="16" fill="#e0b8a8" stroke="#333" stroke-width="1.3"/>
<circle cx="472" cy="537" r="5" fill="none" stroke="#444" stroke-width="0.8"/>
<polygon points="467,537 476,532 476,542" fill="#22aa22"/>
<polyline points="487.7,539 572,539" fill="none" stroke="#efe63a" stroke-width="2.2"/>
<polyline points="513.75,539 513.75,617" fill="none" stroke="#efe63a" stroke-width="2.2"/>
<polyline points="514,555 556,555 556,617" fill="none" stroke="#efe63a" stroke-width="2"/>
<polyline points="538,555 538,600 529,600 529,617" fill="none" stroke="#efe63a" stroke-width="2"/>
<rect x="442.5" y="521" width="12.0" height="16" fill="#fff" stroke="#333" stroke-width="1"/>
<circle cx="449" cy="532" r="3.3" fill="#fff" stroke="#222" stroke-width="1.1"/><path d="M449,530 A2,2 0 0,1 449,534 Z" fill="#555"/>
<polyline points="449,537 449,589.5 398,589.5" fill="none" stroke="#b44cc4" stroke-width="2"/>
<line x1="390" y1="589.5" x2="398" y2="589.5" stroke="#111" stroke-width="0.8"/>
<polygon points="389,589.5 394,587.5 394,591.5" fill="#111"/>
<line x1="448" y1="500" x2="448" y2="508" stroke="#111" stroke-width="0.8"/>
<polygon points="448,509 446,504 450,504" fill="#111"/>
<polyline points="462,539 462,600 424,600 424,618" fill="none" stroke="#ff5555" stroke-width="2.2"/>
<polyline points="462,555 469,555 469,618" fill="none" stroke="#ff5555" stroke-width="2.2"/>
<polyline points="487,545 487,555 475,555 475,612" fill="none" stroke="#e8d0b8" stroke-width="2"/>
<polyline points="383.5,573 762,573" fill="none" stroke="#efe63a" stroke-width="2"/>
<polyline points="383.5,579 762,579" fill="none" stroke="#efe63a" stroke-width="2"/>
<polyline points="383.5,583 762,583" fill="none" stroke="#efe63a" stroke-width="2"/>
<polyline points="514,588 762,588" fill="none" stroke="#efe63a" stroke-width="2"/>
<polyline points="366,583 383.5,583" fill="none" stroke="#a8e640" stroke-width="2"/>
<polyline points="388,559 388,573" fill="none" stroke="#efe63a" stroke-width="2"/>
<polyline points="640,613 675,613" fill="none" stroke="#ff5555" stroke-width="2"/>
<polyline points="645,613 645,625" fill="none" stroke="#ff5555" stroke-width="2"/>
<line x1="645" y1="627" x2="645" y2="635" stroke="#111" stroke-width="0.8"/>
<polygon points="645,636 643,631 647,631" fill="#111"/>
<polyline points="654,613 654,625" fill="none" stroke="#ff5555" stroke-width="2"/>
<line x1="654" y1="627" x2="654" y2="635" stroke="#111" stroke-width="0.8"/>
<polygon points="654,636 652,631 656,631" fill="#111"/>
<polyline points="661,613 661,625" fill="none" stroke="#ff5555" stroke-width="2"/>
<line x1="661" y1="627" x2="661" y2="635" stroke="#111" stroke-width="0.8"/>
<polygon points="661,636 659,631 663,631" fill="#111"/>
<polyline points="668,613 668,625" fill="none" stroke="#ff5555" stroke-width="2"/>
<line x1="668" y1="627" x2="668" y2="635" stroke="#111" stroke-width="0.8"/>
<polygon points="668,636 666,631 670,631" fill="#111"/>
<polyline points="675,613 675,625" fill="none" stroke="#ff5555" stroke-width="2"/>
<line x1="675" y1="627" x2="675" y2="635" stroke="#111" stroke-width="0.8"/>
<polygon points="675,636 673,631 677,631" fill="#111"/>
<polyline points="600,597 682,597 682,618" fill="none" stroke="#ff5555" stroke-width="2"/>
<polyline points="600,591.7 600,605" fill="none" stroke="#ff5555" stroke-width="2"/>
<polyline points="600,603 650,603 650,597" fill="none" stroke="#efe63a" stroke-width="2"/>
<polyline points="605,595 692,595 692,617" fill="none" stroke="#efe63a" stroke-width="2"/>
<polyline points="712,591.7 712,612" fill="none" stroke="#ff5555" stroke-width="2"/>
<polyline points="741,591.7 741,612" fill="none" stroke="#ff5555" stroke-width="2"/>
<line x1="424" y1="619" x2="424" y2="628" stroke="#111" stroke-width="0.8"/>
<polygon points="424,629 422,624 426,624" fill="#111"/>
<line x1="469" y1="619" x2="469" y2="628" stroke="#111" stroke-width="0.8"/>
<polygon points="469,629 467,624 471,624" fill="#111"/>
<line x1="486" y1="619" x2="486" y2="628" stroke="#111" stroke-width="0.8"/>
<polygon points="486,629 484,624 488,624" fill="#111"/>
<line x1="510" y1="627" x2="510" y2="618" stroke="#111" stroke-width="0.8"/>
<polygon points="510,617 508,622 512,622" fill="#111"/>
<line x1="514" y1="627" x2="514" y2="618" stroke="#111" stroke-width="0.8"/>
<polygon points="514,617 512,622 516,622" fill="#111"/>
<line x1="529" y1="627" x2="529" y2="618" stroke="#111" stroke-width="0.8"/>
<polygon points="529,617 527,622 531,622" fill="#111"/>
<line x1="549" y1="619" x2="549" y2="628" stroke="#111" stroke-width="0.8"/>
<polygon points="549,629 547,624 551,624" fill="#111"/>
<line x1="556" y1="627" x2="556" y2="618" stroke="#111" stroke-width="0.8"/>
<polygon points="556,617 554,622 558,622" fill="#111"/>
<line x1="600" y1="619" x2="600" y2="628" stroke="#111" stroke-width="0.8"/>
<polygon points="600,629 598,624 602,624" fill="#111"/>
<line x1="605" y1="627" x2="605" y2="618" stroke="#111" stroke-width="0.8"/>
<polygon points="605,617 603,622 607,622" fill="#111"/>
<line x1="667" y1="619" x2="667" y2="628" stroke="#111" stroke-width="0.8"/>
<polygon points="667,629 665,624 669,624" fill="#111"/>
<line x1="682" y1="627" x2="682" y2="618" stroke="#111" stroke-width="0.8"/>
<polygon points="682,617 680,622 684,622" fill="#111"/>
<line x1="712" y1="619" x2="712" y2="628" stroke="#111" stroke-width="0.8"/>
<polygon points="712,629 710,624 714,624" fill="#111"/>
<line x1="741" y1="619" x2="741" y2="628" stroke="#111" stroke-width="0.8"/>
<polygon points="741,629 739,624 743,624" fill="#111"/>
<circle cx="740" cy="608" r="3.3" fill="#fff" stroke="#222" stroke-width="1.1"/><path d="M740,606 A2,2 0 0,1 740,610 Z" fill="#555"/>
<polygon points="1105.0,288.4 1110.4,283.0 1107.2,283.0 1107.2,277.6 1102.8,277.6 1102.8,283.0 1099.6,283.0" fill="#4646f0"/>
<polygon points="1115.0,277.6 1120.4,283.0 1117.2,283.0 1117.2,288.4 1112.8,288.4 1112.8,283.0 1109.6,283.0" fill="#efe63a"/>
<polygon points="1192.0,277.6 1197.4,283.0 1194.2,283.0 1194.2,288.4 1189.8,288.4 1189.8,283.0 1186.6,283.0" fill="#ff8850"/>
<polygon points="1207.0,277.6 1212.4,283.0 1209.2,283.0 1209.2,288.4 1204.8,288.4 1204.8,283.0 1201.6,283.0" fill="#efe63a"/>
<polygon points="1294.0,277.6 1299.4,283.0 1296.2,283.0 1296.2,288.4 1291.8,288.4 1291.8,283.0 1288.6,283.0" fill="#efe63a"/>
<polygon points="1329.0,277.6 1334.4,283.0 1331.2,283.0 1331.2,288.4 1326.8,288.4 1326.8,283.0 1323.6,283.0" fill="#efe63a"/>
<polygon points="1340.0,277.6 1345.4,283.0 1342.2,283.0 1342.2,288.4 1337.8,288.4 1337.8,283.0 1334.6,283.0" fill="#efe63a"/>
<polygon points="1386.0,277.6 1391.4,283.0 1388.2,283.0 1388.2,288.4 1383.8,288.4 1383.8,283.0 1380.6,283.0" fill="#efe63a"/>
<polygon points="1446.0,277.6 1451.4,283.0 1448.2,283.0 1448.2,288.4 1443.8,288.4 1443.8,283.0 1440.6,283.0" fill="#efe63a"/>
<polygon points="1475.0,277.6 1480.4,283.0 1477.2,283.0 1477.2,288.4 1472.8,288.4 1472.8,283.0 1469.6,283.0" fill="#b88478"/>
<polyline points="1084,325.7 1292,325.7" fill="none" stroke="#ff8850" stroke-width="2.2"/>
<polygon points="1078.4,326.0 1073.0,320.6 1073.0,323.8 1067.6,323.8 1067.6,328.2 1073.0,328.2 1073.0,331.4" fill="#ff8850"/>
<circle cx="1273" cy="325.7" r="3.3" fill="#fff" stroke="#222" stroke-width="1.1"/><path d="M1273,323.7 A2,2 0 0,1 1273,327.7 Z" fill="#555"/>
<polyline points="1105,295 1105,371.5 1135.5,371.5" fill="none" stroke="#4646f0" stroke-width="2.2"/>
<polyline points="1115,295 1115,360 1135.5,360" fill="none" stroke="#efe63a" stroke-width="2.2"/>
<polyline points="1191,295 1191,371.5" fill="none" stroke="#ff6a40" stroke-width="2.2"/>
<polyline points="1165.8,371.5 1196,371.5 1196,800 1396,800" fill="none" stroke="#ff5555" stroke-width="2.2"/>
<polyline points="1207,295 1207,360 1165.8,360" fill="none" stroke="#efe63a" stroke-width="2.2"/>
<polyline points="1202.5,360 1202.5,810" fill="none" stroke="#efe63a" stroke-width="2.2"/>
<polyline points="1209,360 1209,500" fill="none" stroke="#efe63a" stroke-width="2.2"/>
<polyline points="1218,672 1218,350 1329,350 1329,295" fill="none" stroke="#efe63a" stroke-width="2.2"/>
<circle cx="1315" cy="350" r="3.3" fill="#fff" stroke="#222" stroke-width="1.1"/><path d="M1315,348 A2,2 0 0,1 1315,352 Z" fill="#555"/>
<polyline points="1225,576 1225,365 1253,365" fill="none" stroke="#efe63a" stroke-width="2.2"/>
<polyline points="1276,365 1294,365 1294,295" fill="none" stroke="#efe63a" stroke-width="2.2"/>
<rect x="1253" y="356" width="23" height="18" fill="#fff" stroke="#333" stroke-width="1.3"/>
<circle cx="1264.5" cy="365.0" r="6.4799999999999995" fill="none" stroke="#444" stroke-width="0.9"/>
<polygon points="1269.7,365.0 1260.6,360.1 1260.6,369.9" fill="#22dd22" stroke="#1e1e1e" stroke-width="0.6"/>
<polyline points="1232,524 1232,375 1340,375 1340,295" fill="none" stroke="#efe63a" stroke-width="2.2"/>
<circle cx="1339" cy="369" r="3.3" fill="#fff" stroke="#222" stroke-width="1.1"/><path d="M1339,367 A2,2 0 0,1 1339,371 Z" fill="#555"/>
<polyline points="1386,295 1386,375 1465,375 1465,724 1515,724" fill="none" stroke="#efe63a" stroke-width="2.2"/>
<circle cx="1384" cy="370" r="3.3" fill="#fff" stroke="#222" stroke-width="1.1"/><path d="M1384,368 A2,2 0 0,1 1384,372 Z" fill="#555"/>
<polyline points="1446,300 1446,428" fill="none" stroke="#efe63a" stroke-width="2.2"/>
<circle cx="1445" cy="299" r="3.3" fill="#fff" stroke="#222" stroke-width="1.1"/><path d="M1445,297 A2,2 0 0,1 1445,301 Z" fill="#555"/>
<line x1="1446" y1="445" x2="1446" y2="437" stroke="#111" stroke-width="0.8"/>
<polygon points="1446,436 1444,441 1448,441" fill="#111"/>
<polyline points="1475,292 1475,330" fill="none" stroke="#ff8850" stroke-width="2.2"/>
<circle cx="1474" cy="299" r="3.3" fill="#fff" stroke="#222" stroke-width="1.1"/><path d="M1474,297 A2,2 0 0,1 1474,301 Z" fill="#555"/>
<line x1="1475" y1="346" x2="1475" y2="338" stroke="#111" stroke-width="0.8"/>
<polygon points="1475,337 1473,342 1477,342" fill="#111"/>
<rect x="1135.5" y="352.6" width="30.299999999999955" height="26.599999999999966" fill="#c8a8d8" stroke="#333" stroke-width="1.3"/>
<circle cx="1143.984" cy="361.112" r="6.6499999999999915" fill="none" stroke="#444" stroke-width="0.9"/>
<polygon points="1138.7,361.1 1148.0,356.1 1148.0,366.1" fill="#6a5a7a" stroke="#1e1e1e" stroke-width="0.6"/>
<circle cx="1157.316" cy="370.688" r="6.6499999999999915" fill="none" stroke="#444" stroke-width="0.9"/>
<polygon points="1162.6,370.7 1153.3,365.7 1153.3,375.7" fill="#6a5a7a" stroke="#1e1e1e" stroke-width="0.6"/>
<polyline points="1145,388 1386,388 1386,455" fill="none" stroke="#ff5555" stroke-width="2.2"/>
<polyline points="1364,388 1364,455" fill="none" stroke="#ff5555" stroke-width="2.2"/>
<polyline points="1143,392 1203,392" fill="none" stroke="#c0a050" stroke-width="2.2"/>
<polyline points="1178,398 1209,398" fill="none" stroke="#c0a050" stroke-width="2.2"/>
<line x1="1133" y1="388" x2="1141" y2="388" stroke="#111" stroke-width="0.8"/>
<polygon points="1132,388 1137,386 1137,390" fill="#111"/>
<line x1="1133" y1="392" x2="1141" y2="392" stroke="#111" stroke-width="0.8"/>
<polygon points="1142,392 1137,390 1137,394" fill="#111"/>
<polyline points="1142,427 1196,427" fill="none" stroke="#ff5555" stroke-width="2.2"/>
<polyline points="1142,432 1203,432" fill="none" stroke="#c0a050" stroke-width="2.2"/>
<polyline points="1178,437 1209,437" fill="none" stroke="#c0a050" stroke-width="2.2"/>
<line x1="1133" y1="427" x2="1141" y2="427" stroke="#111" stroke-width="0.8"/>
<polygon points="1132,427 1137,425 1137,429" fill="#111"/>
<line x1="1133" y1="432" x2="1141" y2="432" stroke="#111" stroke-width="0.8"/>
<polygon points="1142,432 1137,430 1137,434" fill="#111"/>
<polyline points="1226,431 1247,431 1247,435" fill="none" stroke="#c0a050" stroke-width="2"/>
<polyline points="1210,453 1242,453" fill="none" stroke="#c0a050" stroke-width="2"/>
<polyline points="1244,434 1254,434 1244,448 1244,434" fill="none" stroke="#1e1e1e" stroke-width="1.2"/>
<rect x="1355" y="452" width="9" height="16" fill="none" stroke="#333" stroke-width="1"/>
<rect x="1383" y="452" width="9" height="16" fill="none" stroke="#333" stroke-width="1"/>
<line x1="1348" y1="455.0" x2="1354" y2="455.0" stroke="#111" stroke-width="0.8"/>
<polygon points="1347,455.0 1352,453.0 1352,457.0" fill="#111"/>
<line x1="1393" y1="455.0" x2="1399" y2="455.0" stroke="#111" stroke-width="0.8"/>
<polygon points="1400,455.0 1395,453.0 1395,457.0" fill="#111"/>
<line x1="1348" y1="458.8" x2="1354" y2="458.8" stroke="#111" stroke-width="0.8"/>
<polygon points="1347,458.8 1352,456.8 1352,460.8" fill="#111"/>
<line x1="1393" y1="458.8" x2="1399" y2="458.8" stroke="#111" stroke-width="0.8"/>
<polygon points="1400,458.8 1395,456.8 1395,460.8" fill="#111"/>
<line x1="1348" y1="462.6" x2="1354" y2="462.6" stroke="#111" stroke-width="0.8"/>
<polygon points="1347,462.6 1352,460.6 1352,464.6" fill="#111"/>
<line x1="1393" y1="462.6" x2="1399" y2="462.6" stroke="#111" stroke-width="0.8"/>
<polygon points="1400,462.6 1395,460.6 1395,464.6" fill="#111"/>
<line x1="1348" y1="466.4" x2="1354" y2="466.4" stroke="#111" stroke-width="0.8"/>
<polygon points="1347,466.4 1352,464.4 1352,468.4" fill="#111"/>
<line x1="1393" y1="466.4" x2="1399" y2="466.4" stroke="#111" stroke-width="0.8"/>
<polygon points="1400,466.4 1395,464.4 1395,468.4" fill="#111"/>
<rect x="1505" y="392" width="5" height="18" fill="#fff" stroke="#333" stroke-width="1"/>
<polygon points="1514.8,401.0 1510.0,396.2 1510.0,399.0 1505.2,399.0 1505.2,403.0 1510.0,403.0 1510.0,405.8" fill="#ff8850"/>
<polygon points="1022.4,314.0 1017.0,308.6 1017.0,311.8 1011.6,311.8 1011.6,316.2 1017.0,316.2 1017.0,319.4" fill="#4646f0"/>
<polygon points="1027.0,347.4 1032.4,342.0 1029.2,342.0 1029.2,336.6 1024.8,336.6 1024.8,342.0 1021.6,342.0" fill="#4646f0"/>
<polygon points="1027.0,415.4 1032.4,410.0 1029.2,410.0 1029.2,404.6 1024.8,404.6 1024.8,410.0 1021.6,410.0" fill="#4646f0"/>
<polygon points="1027.0,462.4 1032.4,457.0 1029.2,457.0 1029.2,451.6 1024.8,451.6 1024.8,457.0 1021.6,457.0" fill="#4646f0"/>
<polygon points="1027.0,532.4 1032.4,527.0 1029.2,527.0 1029.2,521.6 1024.8,521.6 1024.8,527.0 1021.6,527.0" fill="#4646f0"/>
<polygon points="1027.0,588.4 1032.4,583.0 1029.2,583.0 1029.2,577.6 1024.8,577.6 1024.8,583.0 1021.6,583.0" fill="#4646f0"/>
<polygon points="1027.0,650.4 1032.4,645.0 1029.2,645.0 1029.2,639.6 1024.8,639.6 1024.8,645.0 1021.6,645.0" fill="#4646f0"/>
<polyline points="1062,505 1062,478 1513,478" fill="none" stroke="#efe63a" stroke-width="2.2"/>
<polyline points="1066,478 1190,478" fill="none" stroke="#c0a050" stroke-width="2.2"/>
<polygon points="1530.4,478.0 1525.0,472.6 1525.0,475.8 1519.6,475.8 1519.6,480.2 1525.0,480.2 1525.0,483.4" fill="#efe63a"/>
<circle cx="1061" cy="498" r="3.3" fill="#fff" stroke="#222" stroke-width="1.1"/><path d="M1061,496 A2,2 0 0,1 1061,500 Z" fill="#555"/>
<line x1="1062" y1="526" x2="1062" y2="518" stroke="#111" stroke-width="0.8"/>
<polygon points="1062,517 1060,522 1064,522" fill="#111"/>
<polyline points="1073,494 1196,494" fill="none" stroke="#d8406a" stroke-width="2.2"/>
<circle cx="1092" cy="494" r="3.3" fill="#fff" stroke="#222" stroke-width="1.1"/><path d="M1092,492 A2,2 0 0,1 1092,496 Z" fill="#555"/>
<polyline points="1126,494 1126,513" fill="none" stroke="#d8406a" stroke-width="2.2"/>
<line x1="1074" y1="497" x2="1074" y2="505" stroke="#111" stroke-width="0.8"/>
<polygon points="1074,506 1072,501 1076,501" fill="#111"/>
<line x1="1080" y1="497" x2="1080" y2="505" stroke="#111" stroke-width="0.8"/>
<polygon points="1080,506 1078,501 1082,501" fill="#111"/>
<line x1="1126" y1="514" x2="1126" y2="522" stroke="#111" stroke-width="0.8"/>
<polygon points="1126,523 1124,518 1128,518" fill="#111"/>
<polyline points="1111,500 1190,500" fill="none" stroke="#c0a050" stroke-width="2.2"/>
<polyline points="1190,500 1209,500" fill="none" stroke="#efe63a" stroke-width="2.2"/>
<polyline points="1256,506 1270,506 1270,560 1330,560" fill="none" stroke="#ff5555" stroke-width="2.2"/>
<line x1="1248" y1="506" x2="1256" y2="506" stroke="#111" stroke-width="0.8"/>
<polygon points="1247,506 1252,504 1252,508" fill="#111"/>
<rect x="1242" y="526" width="10" height="22" fill="#fff" stroke="#333" stroke-width="1"/>
<line x1="1247" y1="549" x2="1247" y2="541" stroke="#111" stroke-width="0.8"/>
<polygon points="1247,540 1245,545 1249,545" fill="#111"/>
<polyline points="1232,524 1248,524" fill="none" stroke="#efe63a" stroke-width="2"/>
<rect x="1295" y="539" width="9" height="18" fill="none" stroke="#333" stroke-width="1"/>
<line x1="1288" y1="542" x2="1294" y2="542" stroke="#111" stroke-width="0.8"/>
<polygon points="1287,542 1292,540 1292,544" fill="#111"/>
<line x1="1288" y1="546" x2="1294" y2="546" stroke="#111" stroke-width="0.8"/>
<polygon points="1287,546 1292,544 1292,548" fill="#111"/>
<line x1="1288" y1="550" x2="1294" y2="550" stroke="#111" stroke-width="0.8"/>
<polygon points="1287,550 1292,548 1292,552" fill="#111"/>
<line x1="1288" y1="554" x2="1294" y2="554" stroke="#111" stroke-width="0.8"/>
<polygon points="1287,554 1292,552 1292,556" fill="#111"/>
<rect x="1316" y="540.7" width="21" height="17.799999999999955" fill="#fff" stroke="#333" stroke-width="1.3"/>
<circle cx="1326.5" cy="549.6" r="6.4079999999999835" fill="none" stroke="#444" stroke-width="0.9"/>
<polygon points="1321.4,549.6 1330.3,544.8 1330.3,554.4" fill="none" stroke="#555" stroke-width="0.6"/>
<polyline points="1067,571 1135,571" fill="none" stroke="#ff5555" stroke-width="2.2"/>
<polyline points="1179,571 1459.6,571" fill="none" stroke="#ff5555" stroke-width="2.2"/>
<polyline points="1066,576 1136,576" fill="none" stroke="#efe63a" stroke-width="2.2"/>
<polyline points="1179,576 1314,576 1314,590" fill="none" stroke="#efe63a" stroke-width="2.2"/>
<line x1="1058" y1="571" x2="1066" y2="571" stroke="#111" stroke-width="0.8"/>
<polygon points="1057,571 1062,569 1062,573" fill="#111"/>
<line x1="1055" y1="576" x2="1063" y2="576" stroke="#111" stroke-width="0.8"/>
<polygon points="1064,576 1059,574 1059,578" fill="#111"/>
<line x1="1135" y1="571" x2="1143" y2="571" stroke="#111" stroke-width="0.8"/>
<polygon points="1144,571 1139,569 1139,573" fill="#111"/>
<line x1="1143" y1="576" x2="1151" y2="576" stroke="#111" stroke-width="0.8"/>
<polygon points="1142,576 1147,574 1147,578" fill="#111"/>
<line x1="1168" y1="571" x2="1176" y2="571" stroke="#111" stroke-width="0.8"/>
<polygon points="1167,571 1172,569 1172,573" fill="#111"/>
<polyline points="1086,571 1086,588" fill="none" stroke="#ff5555" stroke-width="2.2"/>
<polyline points="1094,576 1094,588" fill="none" stroke="#efe63a" stroke-width="2.2"/>
<line x1="1086" y1="590" x2="1086" y2="598" stroke="#111" stroke-width="0.8"/>
<polygon points="1086,599 1084,594 1088,594" fill="#111"/>
<line x1="1094" y1="596" x2="1094" y2="588" stroke="#111" stroke-width="0.8"/>
<polygon points="1094,587 1092,592 1096,592" fill="#111"/>
<polyline points="1115,571 1115,758 1104,758" fill="none" stroke="#ff5555" stroke-width="2.2"/>
<polyline points="1109,576 1109,745 1104,745" fill="none" stroke="#efe63a" stroke-width="2.2"/>
<polyline points="1254,576 1254,590" fill="none" stroke="#efe63a" stroke-width="2"/>
<line x1="1254" y1="605" x2="1254" y2="597" stroke="#111" stroke-width="0.8"/>
<polygon points="1254,596 1252,601 1256,601" fill="#111"/>
<polyline points="1274,576 1274,590" fill="none" stroke="#efe63a" stroke-width="2"/>
<line x1="1274" y1="605" x2="1274" y2="597" stroke="#111" stroke-width="0.8"/>
<polygon points="1274,596 1272,601 1276,601" fill="#111"/>
<polyline points="1294,576 1294,590" fill="none" stroke="#efe63a" stroke-width="2"/>
<line x1="1294" y1="605" x2="1294" y2="597" stroke="#111" stroke-width="0.8"/>
<polygon points="1294,596 1292,601 1296,601" fill="#111"/>
<polyline points="1314,576 1314,590" fill="none" stroke="#efe63a" stroke-width="2"/>
<line x1="1314" y1="605" x2="1314" y2="597" stroke="#111" stroke-width="0.8"/>
<polygon points="1314,596 1312,601 1316,601" fill="#111"/>
<polyline points="1334,571 1334,590" fill="none" stroke="#ff5555" stroke-width="2"/>
<line x1="1334" y1="594" x2="1334" y2="602" stroke="#111" stroke-width="0.8"/>
<polygon points="1334,603 1332,598 1336,598" fill="#111"/>
<polyline points="1363.6,516 1363.6,487 1558,487 1558,625" fill="none" stroke="#efe63a" stroke-width="2.2"/>
<polyline points="1345,514 1375,514" fill="none" stroke="#c0a050" stroke-width="1.5"/>
<polyline points="1336,540 1336,510.4 1509,510.4" fill="none" stroke="#4646f0" stroke-width="2.2"/>
<polygon points="1515.6,510.0 1521.0,504.6 1521.0,507.8 1526.4,507.8 1526.4,512.2 1521.0,512.2 1521.0,515.4" fill="#4646f0"/>
<polyline points="1425.6,534.8 1510,534.8" fill="none" stroke="#4646f0" stroke-width="2.2"/>
<polygon points="1515.6,535.0 1521.0,529.6 1521.0,532.8 1526.4,532.8 1526.4,537.2 1521.0,537.2 1521.0,540.4" fill="#4646f0"/>
<polyline points="1441,510 1441,535" fill="none" stroke="#4646f0" stroke-width="2.2"/>
<polyline points="1431,535 1431,555 1420,555 1420,565" fill="none" stroke="#4646f0" stroke-width="2.2"/>
<rect x="1397.6" y="529.7" width="28.0" height="14.099999999999909" fill="#fff" stroke="#333" stroke-width="1.3"/>
<circle cx="1406.0" cy="536.75" r="5.075999999999967" fill="none" stroke="#444" stroke-width="0.9"/>
<polygon points="1401.9,536.8 1409.0,532.9 1409.0,540.6" fill="#22dd22" stroke="#1e1e1e" stroke-width="0.6"/>
<polyline points="1397.6,537 1385,537 1385,571" fill="none" stroke="#ff5555" stroke-width="2.2"/>
<polyline points="1418,571 1418,597 1459.6,597" fill="none" stroke="#ff5555" stroke-width="2.2"/>
<line x1="1423.0" y1="573" x2="1423.0" y2="581" stroke="#111" stroke-width="0.8"/>
<polygon points="1423.0,582 1421.0,577 1425.0,577" fill="#111"/>
<line x1="1423.0" y1="599" x2="1423.0" y2="607" stroke="#111" stroke-width="0.8"/>
<polygon points="1423.0,608 1421.0,603 1425.0,603" fill="#111"/>
<line x1="1427.3" y1="573" x2="1427.3" y2="581" stroke="#111" stroke-width="0.8"/>
<polygon points="1427.3,582 1425.3,577 1429.3,577" fill="#111"/>
<line x1="1427.3" y1="599" x2="1427.3" y2="607" stroke="#111" stroke-width="0.8"/>
<polygon points="1427.3,608 1425.3,603 1429.3,603" fill="#111"/>
<line x1="1431.6" y1="573" x2="1431.6" y2="581" stroke="#111" stroke-width="0.8"/>
<polygon points="1431.6,582 1429.6,577 1433.6,577" fill="#111"/>
<line x1="1431.6" y1="599" x2="1431.6" y2="607" stroke="#111" stroke-width="0.8"/>
<polygon points="1431.6,608 1429.6,603 1433.6,603" fill="#111"/>
<line x1="1435.9" y1="573" x2="1435.9" y2="581" stroke="#111" stroke-width="0.8"/>
<polygon points="1435.9,582 1433.9,577 1437.9,577" fill="#111"/>
<line x1="1435.9" y1="599" x2="1435.9" y2="607" stroke="#111" stroke-width="0.8"/>
<polygon points="1435.9,608 1433.9,603 1437.9,603" fill="#111"/>
<line x1="1440.2" y1="573" x2="1440.2" y2="581" stroke="#111" stroke-width="0.8"/>
<polygon points="1440.2,582 1438.2,577 1442.2,577" fill="#111"/>
<line x1="1440.2" y1="599" x2="1440.2" y2="607" stroke="#111" stroke-width="0.8"/>
<polygon points="1440.2,608 1438.2,603 1442.2,603" fill="#111"/>
<line x1="1444.5" y1="573" x2="1444.5" y2="581" stroke="#111" stroke-width="0.8"/>
<polygon points="1444.5,582 1442.5,577 1446.5,577" fill="#111"/>
<line x1="1444.5" y1="599" x2="1444.5" y2="607" stroke="#111" stroke-width="0.8"/>
<polygon points="1444.5,608 1442.5,603 1446.5,603" fill="#111"/>
<line x1="1448.8" y1="573" x2="1448.8" y2="581" stroke="#111" stroke-width="0.8"/>
<polygon points="1448.8,582 1446.8,577 1450.8,577" fill="#111"/>
<line x1="1448.8" y1="599" x2="1448.8" y2="607" stroke="#111" stroke-width="0.8"/>
<polygon points="1448.8,608 1446.8,603 1450.8,603" fill="#111"/>
<line x1="1453.1" y1="573" x2="1453.1" y2="581" stroke="#111" stroke-width="0.8"/>
<polygon points="1453.1,582 1451.1,577 1455.1,577" fill="#111"/>
<line x1="1453.1" y1="599" x2="1453.1" y2="607" stroke="#111" stroke-width="0.8"/>
<polygon points="1453.1,608 1451.1,603 1455.1,603" fill="#111"/>
<line x1="1457.4" y1="573" x2="1457.4" y2="581" stroke="#111" stroke-width="0.8"/>
<polygon points="1457.4,582 1455.4,577 1459.4,577" fill="#111"/>
<line x1="1457.4" y1="599" x2="1457.4" y2="607" stroke="#111" stroke-width="0.8"/>
<polygon points="1457.4,608 1455.4,603 1459.4,603" fill="#111"/>
<circle cx="1557" cy="629" r="3.3" fill="#fff" stroke="#222" stroke-width="1.1"/><path d="M1557,627 A2,2 0 0,1 1557,631 Z" fill="#555"/>
<polyline points="1218,672 1398,672" fill="none" stroke="#efe63a" stroke-width="2.2"/>
<line x1="1405" y1="672" x2="1413" y2="672" stroke="#111" stroke-width="0.8"/>
<polygon points="1404,672 1409,670 1409,674" fill="#111"/>
<polygon points="1034.5,681.5 1034.5,674.3 1031.8,677.0 1027.3,672.5 1025.5,674.3 1030.0,678.8 1027.3,681.5" fill="#4646f0"/>
<polygon points="1067.4,680.0 1062.0,674.6 1062.0,677.8 1056.6,677.8 1056.6,682.2 1062.0,682.2 1062.0,685.4" fill="#4646f0"/>
<polygon points="1143.4,680.0 1138.0,674.6 1138.0,677.8 1132.6,677.8 1132.6,682.2 1138.0,682.2 1138.0,685.4" fill="#4646f0"/>
<polygon points="1223.4,680.0 1218.0,674.6 1218.0,677.8 1212.6,677.8 1212.6,682.2 1218.0,682.2 1218.0,685.4" fill="#4646f0"/>
<polygon points="1256.5,698.5 1256.5,691.3 1253.8,694.0 1249.3,689.5 1247.5,691.3 1252.0,695.8 1249.3,698.5" fill="#4646f0"/>
<polygon points="1259.0,732.4 1264.4,727.0 1261.2,727.0 1261.2,721.6 1256.8,721.6 1256.8,727.0 1253.6,727.0" fill="#4646f0"/>
<polygon points="1272.5,752.5 1272.5,745.3 1269.8,748.0 1265.3,743.5 1263.5,745.3 1268.0,749.8 1265.3,752.5" fill="#4646f0"/>
<polyline points="1022,692 1492,692 1492,750 1486,750" fill="none" stroke="#b44cc4" stroke-width="2.2"/>
<polyline points="1400,683 1508,683" fill="none" stroke="#b44cc4" stroke-width="2.2"/>
<polygon points="1522.4,683.0 1517.0,677.6 1517.0,680.8 1511.6,680.8 1511.6,685.2 1517.0,685.2 1517.0,688.4" fill="#cc44cc"/>
<polyline points="1400,683 1400,750 1397,750" fill="none" stroke="#b44cc4" stroke-width="2"/>
<polyline points="1150,702.7 1508,702.7" fill="none" stroke="#efe63a" stroke-width="2.2"/>
<polygon points="1522.4,703.0 1517.0,697.6 1517.0,700.8 1511.6,700.8 1511.6,705.2 1517.0,705.2 1517.0,708.4" fill="#efe63a"/>
<circle cx="1155" cy="702.7" r="3.3" fill="#fff" stroke="#222" stroke-width="1.1"/><path d="M1155,700.7 A2,2 0 0,1 1155,704.7 Z" fill="#555"/>
<line x1="1135" y1="702.7" x2="1143" y2="702.7" stroke="#111" stroke-width="0.8"/>
<polygon points="1144,702.7 1139,700.7 1139,704.7" fill="#111"/>
<polyline points="1022,697 1074,697 1074,707 1022,707" fill="none" stroke="#b44cc4" stroke-width="2"/>
<rect x="1026.5" y="716" width="23.5" height="14" fill="#d6d6a8" stroke="#333" stroke-width="1.3"/>
<circle cx="1038" cy="723" r="5.5" fill="none" stroke="#555" stroke-width="0.8"/>
<polygon points="1033,723 1042,718 1042,728" fill="#6a6a4a"/>
<rect x="1028.6" y="738.7" width="24.100000000000136" height="13.5" fill="#a8a8f0" stroke="#333" stroke-width="1.3"/>
<circle cx="1040" cy="745.5" r="5.5" fill="none" stroke="#555" stroke-width="0.8"/>
<polygon points="1035,745.5 1044,740.5 1044,750.5" fill="#5a5aa8"/>
<polyline points="1022,709.5 1120,709.5 1120,794" fill="none" stroke="#666" stroke-width="1.2"/>
<rect x="1074.4" y="736.6" width="30.09999999999991" height="26.799999999999955" fill="#fff" stroke="#333" stroke-width="1.3"/>
<circle cx="1083.43" cy="744.64" r="6.699999999999989" fill="none" stroke="#444" stroke-width="0.9"/>
<polygon points="1078.1,744.6 1087.5,739.6 1087.5,749.7" fill="#888" stroke="#1e1e1e" stroke-width="0.6"/>
<circle cx="1095.47" cy="754.824" r="6.699999999999989" fill="none" stroke="#444" stroke-width="0.9"/>
<polygon points="1100.8,754.8 1091.5,749.8 1091.5,759.8" fill="#888" stroke="#1e1e1e" stroke-width="0.6"/>
<polyline points="1104,758 1115,758" fill="none" stroke="#ff5555" stroke-width="2"/>
<polyline points="1104,745 1109,745" fill="none" stroke="#efe63a" stroke-width="2"/>
<polyline points="1074,745 1056,745 1056,762 1007,762" fill="none" stroke="#b88a72" stroke-width="2"/>
<polyline points="1074,754 1059,754 1059,770 1007,770" fill="none" stroke="#7a7af8" stroke-width="2"/>
<polyline points="1068,762 1068,799 1022,799" fill="none" stroke="#4646f0" stroke-width="2"/>
<polyline points="1286,754 1286,869 817.5,869" fill="none" stroke="#b44cc4" stroke-width="2.2"/>
<polyline points="1260,754 1285,754" fill="none" stroke="#b44cc4" stroke-width="2"/>
<polyline points="1346,778 1346,856 809,856" fill="none" stroke="#b44cc4" stroke-width="2.2"/>
<polyline points="1286,789.5 1370,789.5 1370,775" fill="none" stroke="#b44cc4" stroke-width="2"/>
<polyline points="1243,770 1243,825 922,825 922,809.8" fill="none" stroke="#efe63a" stroke-width="2.2"/>
<line x1="1243" y1="754" x2="1243" y2="762" stroke="#111" stroke-width="0.8"/>
<polygon points="1243,763 1241,758 1245,758" fill="#111"/>
<polyline points="1384,672 1384,804 1396,804" fill="none" stroke="#efe63a" stroke-width="2.2"/>
<line x1="1197" y1="802" x2="1197" y2="810" stroke="#111" stroke-width="0.8"/>
<polygon points="1197,811 1195,806 1199,806" fill="#111"/>
<line x1="1204" y1="818" x2="1204" y2="810" stroke="#111" stroke-width="0.8"/>
<polygon points="1204,809 1202,814 1206,814" fill="#111"/>
<line x1="1398" y1="800" x2="1406" y2="800" stroke="#111" stroke-width="0.8"/>
<polygon points="1407,800 1402,798 1402,802" fill="#111"/>
<line x1="1406" y1="805" x2="1414" y2="805" stroke="#111" stroke-width="0.8"/>
<polygon points="1405,805 1410,803 1410,807" fill="#111"/>
<rect x="1330" y="774.6" width="46" height="12.399999999999977" fill="#fff" stroke="#333" stroke-width="1.2"/>
<circle cx="1349" cy="760" r="5.5" fill="none" stroke="#555" stroke-width="0.8"/>
<polygon points="1355,760 1346,755 1346,765" fill="#6a8a7a"/>
<circle cx="1348" cy="727" r="3.3" fill="#fff" stroke="#222" stroke-width="1.1"/><path d="M1348,725 A2,2 0 0,1 1348,729 Z" fill="#555"/>
<circle cx="1369" cy="727" r="3.3" fill="#fff" stroke="#222" stroke-width="1.1"/><path d="M1369,725 A2,2 0 0,1 1369,729 Z" fill="#555"/>
<rect x="1402.6" y="746" width="23.40000000000009" height="14" fill="#fff" stroke="#333" stroke-width="1.2"/>
<polyline points="1377,767 1396,767 1396,776 1434,776 1434,752 1453,752" fill="none" stroke="#b44cc4" stroke-width="2"/>
<polyline points="1397,763 1427,763 1427,770 1450,770 1450,752" fill="none" stroke="#b44cc4" stroke-width="2"/>
<rect x="1453" y="743" width="33" height="17" fill="#b0b0d0" stroke="#333" stroke-width="1.3"/>
<circle cx="1476.76" cy="751.5" r="6.12" fill="none" stroke="#444" stroke-width="0.9"/>
<polygon points="1481.7,751.5 1473.1,746.9 1473.1,756.1" fill="#5a5a8a" stroke="#1e1e1e" stroke-width="0.6"/>
<polyline points="1519,760 1570,760 1570,708" fill="none" stroke="#b44cc4" stroke-width="2.2"/>
<circle cx="1515" cy="760" r="3.3" fill="#fff" stroke="#222" stroke-width="1.1"/><path d="M1515,758 A2,2 0 0,1 1515,762 Z" fill="#555"/>
<line x1="1570" y1="708" x2="1570" y2="700" stroke="#111" stroke-width="0.8"/>
<polygon points="1570,699 1568,704 1572,704" fill="#111"/>
<line x1="1484" y1="760" x2="1492" y2="760" stroke="#111" stroke-width="0.8"/>
<polygon points="1493,760 1488,758 1488,762" fill="#111"/>
<linearGradient id="cyl" x1="0" y1="0" x2="0" y2="1"><stop offset="0" stop-color="#c8c8c8"/><stop offset="0.5" stop-color="#8a8a8a"/><stop offset="1" stop-color="#666"/></linearGradient><rect x="1515" y="716" width="22" height="17" rx="3" fill="url(#cyl)" stroke="#888" stroke-width="0.8"/>
<polyline points="775.7,794 775.7,856" fill="none" stroke="#b44cc4" stroke-width="2.2"/>
<polyline points="834.5,794 834.5,856" fill="none" stroke="#b44cc4" stroke-width="2.2"/>
<polyline points="876.6,757 876.6,856" fill="none" stroke="#b44cc4" stroke-width="2.2"/>
<polyline points="894.8,757 894.8,856" fill="none" stroke="#b44cc4" stroke-width="2.2"/>
<polyline points="946,794 946,856" fill="none" stroke="#b44cc4" stroke-width="2.2"/>
<polyline points="775.7,856 778.5,856" fill="none" stroke="#b44cc4" stroke-width="2"/>
<rect x="778.5" y="849.5" width="31.100000000000023" height="16.5" fill="#fff" stroke="#333" stroke-width="1.3"/>
<circle cx="789.385" cy="857.75" r="5.9399999999999995" fill="none" stroke="#444" stroke-width="0.9"/>
<polygon points="784.6,857.8 792.9,853.3 792.9,862.2" fill="#22dd22" stroke="#1e1e1e" stroke-width="0.6"/>
<polyline points="809.6,855.4 1346,855.4" fill="none" stroke="#b44cc4" stroke-width="2.2"/>
<polyline points="817.5,855 817.5,868.4" fill="none" stroke="#b44cc4" stroke-width="2"/>
<rect x="771" y="729" width="7" height="64" fill="none" stroke="#335533" stroke-width="1"/>
<line x1="780" y1="728" x2="780" y2="720" stroke="#111" stroke-width="0.8"/>
<polygon points="780,719 778,724 782,724" fill="#111"/>
<rect x="815" y="762" width="10" height="31" fill="none" stroke="#335533" stroke-width="1"/>
<rect x="945" y="762" width="10" height="31" fill="none" stroke="#335533" stroke-width="1"/>
<line x1="812" y1="765" x2="820" y2="765" stroke="#111" stroke-width="0.8"/>
<polygon points="811,765 816,763 816,767" fill="#111"/>
<line x1="828" y1="765" x2="836" y2="765" stroke="#111" stroke-width="0.8"/>
<polygon points="837,765 832,763 832,767" fill="#111"/>
<line x1="942" y1="765" x2="950" y2="765" stroke="#111" stroke-width="0.8"/>
<polygon points="941,765 946,763 946,767" fill="#111"/>
<line x1="958" y1="765" x2="966" y2="765" stroke="#111" stroke-width="0.8"/>
<polygon points="967,765 962,763 962,767" fill="#111"/>
<line x1="812" y1="770" x2="820" y2="770" stroke="#111" stroke-width="0.8"/>
<polygon points="811,770 816,768 816,772" fill="#111"/>
<line x1="828" y1="770" x2="836" y2="770" stroke="#111" stroke-width="0.8"/>
<polygon points="837,770 832,768 832,772" fill="#111"/>
<line x1="942" y1="770" x2="950" y2="770" stroke="#111" stroke-width="0.8"/>
<polygon points="941,770 946,768 946,772" fill="#111"/>
<line x1="958" y1="770" x2="966" y2="770" stroke="#111" stroke-width="0.8"/>
<polygon points="967,770 962,768 962,772" fill="#111"/>
<line x1="812" y1="775" x2="820" y2="775" stroke="#111" stroke-width="0.8"/>
<polygon points="811,775 816,773 816,777" fill="#111"/>
<line x1="828" y1="775" x2="836" y2="775" stroke="#111" stroke-width="0.8"/>
<polygon points="837,775 832,773 832,777" fill="#111"/>
<line x1="942" y1="775" x2="950" y2="775" stroke="#111" stroke-width="0.8"/>
<polygon points="941,775 946,773 946,777" fill="#111"/>
<line x1="958" y1="775" x2="966" y2="775" stroke="#111" stroke-width="0.8"/>
<polygon points="967,775 962,773 962,777" fill="#111"/>
<line x1="812" y1="780" x2="820" y2="780" stroke="#111" stroke-width="0.8"/>
<polygon points="811,780 816,778 816,782" fill="#111"/>
<line x1="828" y1="780" x2="836" y2="780" stroke="#111" stroke-width="0.8"/>
<polygon points="837,780 832,778 832,782" fill="#111"/>
<line x1="942" y1="780" x2="950" y2="780" stroke="#111" stroke-width="0.8"/>
<polygon points="941,780 946,778 946,782" fill="#111"/>
<line x1="958" y1="780" x2="966" y2="780" stroke="#111" stroke-width="0.8"/>
<polygon points="967,780 962,778 962,782" fill="#111"/>
<line x1="812" y1="785" x2="820" y2="785" stroke="#111" stroke-width="0.8"/>
<polygon points="811,785 816,783 816,787" fill="#111"/>
<line x1="828" y1="785" x2="836" y2="785" stroke="#111" stroke-width="0.8"/>
<polygon points="837,785 832,783 832,787" fill="#111"/>
<line x1="942" y1="785" x2="950" y2="785" stroke="#111" stroke-width="0.8"/>
<polygon points="941,785 946,783 946,787" fill="#111"/>
<line x1="958" y1="785" x2="966" y2="785" stroke="#111" stroke-width="0.8"/>
<polygon points="967,785 962,783 962,787" fill="#111"/>
<line x1="812" y1="790" x2="820" y2="790" stroke="#111" stroke-width="0.8"/>
<polygon points="811,790 816,788 816,792" fill="#111"/>
<line x1="828" y1="790" x2="836" y2="790" stroke="#111" stroke-width="0.8"/>
<polygon points="837,790 832,788 832,792" fill="#111"/>
<line x1="942" y1="790" x2="950" y2="790" stroke="#111" stroke-width="0.8"/>
<polygon points="941,790 946,788 946,792" fill="#111"/>
<line x1="958" y1="790" x2="966" y2="790" stroke="#111" stroke-width="0.8"/>
<polygon points="967,790 962,788 962,792" fill="#111"/>
<line x1="876" y1="753" x2="876" y2="745" stroke="#111" stroke-width="0.8"/>
<polygon points="876,744 874,749 878,749" fill="#111"/>
<line x1="895" y1="753" x2="895" y2="745" stroke="#111" stroke-width="0.8"/>
<polygon points="895,744 893,749 897,749" fill="#111"/>
<line x1="834" y1="820" x2="843" y2="820" stroke="#111" stroke-width="0.8"/>
<polygon points="844,820 839,818 839,822" fill="#111"/>
<line x1="902" y1="825" x2="911" y2="825" stroke="#111" stroke-width="0.8"/>
<polygon points="912,825 907,823 907,827" fill="#111"/>
<polyline points="764,893 764,884.8 1409,884.8 1409,909.3 763,909.3 763,916" fill="none" stroke="#c060c8" stroke-width="2"/>
<polyline points="950,898 950,890 1355,890 1355,884" fill="none" stroke="#b44cc4" stroke-width="2"/>
<polyline points="950,922 950,914.4 1352,914.4 1352,909" fill="none" stroke="#b44cc4" stroke-width="2"/>
<rect x="1370" y="887.6" width="33.40000000000009" height="18.0" fill="#fff" stroke="#333" stroke-width="1.3"/>
<circle cx="1391.71" cy="896.6" r="6.4799999999999995" fill="none" stroke="#444" stroke-width="0.9"/>
<polygon points="1396.9,896.6 1387.8,891.7 1387.8,901.5" fill="#22dd22" stroke="#1e1e1e" stroke-width="0.6"/>
<line x1="764" y1="891" x2="764" y2="899" stroke="#111" stroke-width="0.8"/>
<polygon points="764,900 762,895 766,895" fill="#111"/>
<line x1="764" y1="915" x2="764" y2="923" stroke="#111" stroke-width="0.8"/>
<polygon points="764,924 762,919 766,919" fill="#111"/>
<line x1="807" y1="891" x2="807" y2="899" stroke="#111" stroke-width="0.8"/>
<polygon points="807,900 805,895 809,895" fill="#111"/>
<line x1="807" y1="915" x2="807" y2="923" stroke="#111" stroke-width="0.8"/>
<polygon points="807,924 805,919 809,919" fill="#111"/>
<line x1="877" y1="891" x2="877" y2="899" stroke="#111" stroke-width="0.8"/>
<polygon points="877,900 875,895 879,895" fill="#111"/>
<line x1="877" y1="915" x2="877" y2="923" stroke="#111" stroke-width="0.8"/>
<polygon points="877,924 875,919 879,919" fill="#111"/>
<line x1="951" y1="897" x2="951" y2="905" stroke="#111" stroke-width="0.8"/>
<polygon points="951,906 949,901 953,901" fill="#111"/>
<line x1="951" y1="921" x2="951" y2="929" stroke="#111" stroke-width="0.8"/>
<polygon points="951,930 949,925 953,925" fill="#111"/>
<line x1="993" y1="897" x2="993" y2="905" stroke="#111" stroke-width="0.8"/>
<polygon points="993,906 991,901 995,901" fill="#111"/>
<line x1="993" y1="921" x2="993" y2="929" stroke="#111" stroke-width="0.8"/>
<polygon points="993,930 991,925 995,925" fill="#111"/>
<line x1="1033" y1="897" x2="1033" y2="905" stroke="#111" stroke-width="0.8"/>
<polygon points="1033,906 1031,901 1035,901" fill="#111"/>
<line x1="1033" y1="921" x2="1033" y2="929" stroke="#111" stroke-width="0.8"/>
<polygon points="1033,930 1031,925 1035,925" fill="#111"/>
<line x1="1364" y1="920" x2="1364" y2="928" stroke="#111" stroke-width="0.8"/>
<polygon points="1364,929 1362,924 1366,924" fill="#111"/>
<polyline points="982,639 1010,639 1010,691 1022,691" fill="none" stroke="#b44cc4" stroke-width="2"/>
<polyline points="982,656 1005,656 1005,698 1022,698" fill="none" stroke="#b44cc4" stroke-width="2"/>
<polyline points="982,670 1001,670 1001,706 1022,706" fill="none" stroke="#b44cc4" stroke-width="2"/>
<line x1="972" y1="639" x2="981" y2="639" stroke="#111" stroke-width="0.8"/>
<polygon points="971,639 976,637 976,641" fill="#111"/>
<line x1="972" y1="656" x2="981" y2="656" stroke="#111" stroke-width="0.8"/>
<polygon points="971,656 976,654 976,658" fill="#111"/>
<line x1="972" y1="670" x2="981" y2="670" stroke="#111" stroke-width="0.8"/>
<polygon points="971,670 976,668 976,672" fill="#111"/>
<polyline points="984,711 1007,711 1007,723 1026,723" fill="none" stroke="#b44cc4" stroke-width="2"/>
<polyline points="955,745 1028,745" fill="none" stroke="#b44cc4" stroke-width="2"/>
<line x1="983" y1="750" x2="983" y2="742" stroke="#111" stroke-width="0.8"/>
<polygon points="983,741 981,746 985,746" fill="#111"/>
<line x1="989" y1="750" x2="989" y2="742" stroke="#111" stroke-width="0.8"/>
<polygon points="989,741 987,746 991,746" fill="#111"/>
<line x1="995" y1="750" x2="995" y2="742" stroke="#111" stroke-width="0.8"/>
<polygon points="995,741 993,746 997,746" fill="#111"/>
<line x1="1001" y1="750" x2="1001" y2="742" stroke="#111" stroke-width="0.8"/>
<polygon points="1001,741 999,746 1003,746" fill="#111"/>
<line x1="1007" y1="750" x2="1007" y2="742" stroke="#111" stroke-width="0.8"/>
<polygon points="1007,741 1005,746 1009,746" fill="#111"/>
<line x1="990" y1="708" x2="990" y2="700" stroke="#111" stroke-width="0.8"/>
<polygon points="990,699 988,704 992,704" fill="#111"/>
<rect x="776" y="262" width="16" height="4" fill="#c5e8d4" stroke="#335533" stroke-width="1"/>
<rect x="795" y="262" width="16" height="4" fill="#c5e8d4" stroke="#335533" stroke-width="1"/>
<rect x="814" y="262" width="16" height="4" fill="#c5e8d4" stroke="#335533" stroke-width="1"/>
<rect x="833" y="262" width="16" height="4" fill="#c5e8d4" stroke="#335533" stroke-width="1"/>
<rect x="852" y="262" width="16" height="4" fill="#c5e8d4" stroke="#335533" stroke-width="1"/>
<rect x="871" y="262" width="16" height="4" fill="#c5e8d4" stroke="#335533" stroke-width="1"/>
<rect x="890" y="262" width="16" height="4" fill="#c5e8d4" stroke="#335533" stroke-width="1"/>
<rect x="909" y="262" width="16" height="4" fill="#c5e8d4" stroke="#335533" stroke-width="1"/>
<rect x="928" y="262" width="16" height="4" fill="#c5e8d4" stroke="#335533" stroke-width="1"/>
<rect x="947" y="262" width="16" height="4" fill="#c5e8d4" stroke="#335533" stroke-width="1"/>
<rect x="966" y="262" width="16" height="4" fill="#c5e8d4" stroke="#335533" stroke-width="1"/>
<rect x="985" y="262" width="16" height="4" fill="#c5e8d4" stroke="#335533" stroke-width="1"/>
<polygon points="804.0,246.6 809.4,252.0 806.2,252.0 806.2,257.4 801.8,257.4 801.8,252.0 798.6,252.0" fill="#ff8850"/>
<polygon points="824.0,246.6 829.4,252.0 826.2,252.0 826.2,257.4 821.8,257.4 821.8,252.0 818.6,252.0" fill="#ff8850"/>
<polygon points="840.0,246.6 845.4,252.0 842.2,252.0 842.2,257.4 837.8,257.4 837.8,252.0 834.6,252.0" fill="#ff8850"/>
<circle cx="797" cy="271" r="3" fill="none" stroke="#335533" stroke-width="0.9"/>
<line x1="797" y1="286" x2="797" y2="278" stroke="#111" stroke-width="0.8"/>
<polygon points="797,277 795,282 799,282" fill="#111"/>
<circle cx="806" cy="271" r="3" fill="none" stroke="#335533" stroke-width="0.9"/>
<line x1="806" y1="286" x2="806" y2="278" stroke="#111" stroke-width="0.8"/>
<polygon points="806,277 804,282 808,282" fill="#111"/>
<circle cx="818" cy="271" r="3" fill="none" stroke="#335533" stroke-width="0.9"/>
<line x1="818" y1="286" x2="818" y2="278" stroke="#111" stroke-width="0.8"/>
<polygon points="818,277 816,282 820,282" fill="#111"/>
<circle cx="826" cy="271" r="3" fill="none" stroke="#335533" stroke-width="0.9"/>
<line x1="826" y1="286" x2="826" y2="278" stroke="#111" stroke-width="0.8"/>
<polygon points="826,277 824,282 828,282" fill="#111"/>
<circle cx="837" cy="271" r="3" fill="none" stroke="#335533" stroke-width="0.9"/>
<line x1="837" y1="286" x2="837" y2="278" stroke="#111" stroke-width="0.8"/>
<polygon points="837,277 835,282 839,282" fill="#111"/>
<circle cx="845" cy="271" r="3" fill="none" stroke="#335533" stroke-width="0.9"/>
<line x1="845" y1="286" x2="845" y2="278" stroke="#111" stroke-width="0.8"/>
<polygon points="845,277 843,282 847,282" fill="#111"/>
<line x1="825.0" y1="368" x2="825.0" y2="377" stroke="#111" stroke-width="0.8"/>
<polygon points="825.0,378 823.0,373 827.0,373" fill="#111"/>
<line x1="839.5" y1="368" x2="839.5" y2="377" stroke="#111" stroke-width="0.8"/>
<polygon points="839.5,378 837.5,373 841.5,373" fill="#111"/>
<line x1="854.0" y1="368" x2="854.0" y2="377" stroke="#111" stroke-width="0.8"/>
<polygon points="854.0,378 852.0,373 856.0,373" fill="#111"/>
<line x1="868.5" y1="368" x2="868.5" y2="377" stroke="#111" stroke-width="0.8"/>
<polygon points="868.5,378 866.5,373 870.5,373" fill="#111"/>
<line x1="883.0" y1="368" x2="883.0" y2="377" stroke="#111" stroke-width="0.8"/>
<polygon points="883.0,378 881.0,373 885.0,373" fill="#111"/>
<line x1="897.5" y1="368" x2="897.5" y2="377" stroke="#111" stroke-width="0.8"/>
<polygon points="897.5,378 895.5,373 899.5,373" fill="#111"/>
<line x1="912.0" y1="368" x2="912.0" y2="377" stroke="#111" stroke-width="0.8"/>
<polygon points="912.0,378 910.0,373 914.0,373" fill="#111"/>
<line x1="926.5" y1="368" x2="926.5" y2="377" stroke="#111" stroke-width="0.8"/>
<polygon points="926.5,378 924.5,373 928.5,373" fill="#111"/>
<line x1="941.0" y1="368" x2="941.0" y2="377" stroke="#111" stroke-width="0.8"/>
<polygon points="941.0,378 939.0,373 943.0,373" fill="#111"/>
<line x1="980" y1="444" x2="980" y2="452" stroke="#111" stroke-width="0.8"/>
<polygon points="980,453 978,448 982,448" fill="#111"/>
<line x1="986" y1="444" x2="986" y2="452" stroke="#111" stroke-width="0.8"/>
<polygon points="986,453 984,448 988,448" fill="#111"/>
<polyline points="971,446 1016,446 1016,470" fill="none" stroke="#b44cc4" stroke-width="2"/>
<line x1="762" y1="540" x2="770" y2="540" stroke="#111" stroke-width="0.8"/>
<polygon points="771,540 766,538 766,542" fill="#111"/>
<line x1="770" y1="573" x2="778" y2="573" stroke="#111" stroke-width="0.8"/>
<polygon points="769,573 774,571 774,575" fill="#111"/>
<line x1="762" y1="577" x2="770" y2="577" stroke="#111" stroke-width="0.8"/>
<polygon points="771,577 766,575 766,579" fill="#111"/>
<line x1="770" y1="583" x2="778" y2="583" stroke="#111" stroke-width="0.8"/>
<polygon points="769,583 774,581 774,585" fill="#111"/>
<rect x="975" y="748" width="46" height="46" fill="none" stroke="#555" stroke-width="0.7" stroke-dasharray="2,2"/>
<rect x="1007" y="775" width="14" height="68" fill="none" stroke="#333" stroke-width="1"/>
<circle cx="1013" cy="787" r="3" fill="none" stroke="#333" stroke-width="0.9"/>
<polyline points="1002,780 1014,780 1014,808 1033,808" fill="none" stroke="#ff8850" stroke-width="2"/>
<polygon points="1037.6,808.0 1043.0,802.6 1043.0,805.8 1048.4,805.8 1048.4,810.2 1043.0,810.2 1043.0,813.4" fill="#b88a72"/>
<polygon points="1015.4,770.0 1010.0,764.6 1010.0,767.8 1004.6,767.8 1004.6,772.2 1010.0,772.2 1010.0,775.4" fill="#4a6ae0"/>
<polygon points="989.6,780.0 995.0,774.6 995.0,777.8 1000.4,777.8 1000.4,782.2 995.0,782.2 995.0,785.4" fill="#a09080"/>
<polygon points="1002.6,762.0 1008.0,756.6 1008.0,759.8 1013.4,759.8 1013.4,764.2 1008.0,764.2 1008.0,767.4" fill="#a09080"/>
<text transform="translate(31,125) scale(0.94,1)" font-size="13" fill="#111" font-style="italic" text-anchor="start" font-weight="normal">AS215</text>
<text transform="translate(191,812) scale(0.94,1)" font-size="13" fill="#111" font-style="italic" text-anchor="start" font-weight="normal">143</text>
<text transform="translate(266,812) scale(0.94,1)" font-size="13" fill="#111" font-style="italic" text-anchor="start" font-weight="normal">145</text>
<text transform="translate(335,812) scale(0.94,1)" font-size="13" fill="#111" font-style="italic" text-anchor="start" font-weight="normal">147</text>
<text transform="translate(405,826) scale(0.94,1)" font-size="13" fill="#111" font-style="italic" text-anchor="start" font-weight="normal">117</text>
<text transform="translate(299,888) scale(0.94,1)" font-size="13" fill="#111" font-style="italic" text-anchor="start" font-weight="normal">153</text>
<text transform="translate(116,481) scale(0.94,1)" font-size="13" fill="#1e6e1e" font-style="italic" text-anchor="start" font-weight="normal">656b</text>
<text transform="translate(246,481) scale(0.94,1)" font-size="13" fill="#111" font-style="italic" text-anchor="start" font-weight="normal">564</text>
<text transform="translate(459,481) scale(0.94,1)" font-size="13" fill="#111" font-style="italic" text-anchor="start" font-weight="normal">549</text>
<text transform="translate(35,635) scale(0.94,1)" font-size="13" fill="#111" font-style="italic" text-anchor="start" font-weight="normal">446a, b 449</text>
<text transform="translate(131,635) scale(0.94,1)" font-size="13" fill="#1e6e1e" font-style="italic" text-anchor="start" font-weight="normal">454</text>
<text transform="translate(178,635) scale(0.94,1)" font-size="13" fill="#1e6e1e" font-style="italic" text-anchor="start" font-weight="normal">461a</text>
<text transform="translate(226,635) scale(0.94,1)" font-size="13" fill="#1e6e1e" font-style="italic" text-anchor="start" font-weight="normal">455</text>
<text transform="translate(280,650) scale(0.94,1)" font-size="13" fill="#1e6e1e" font-style="italic" text-anchor="start" font-weight="normal">452</text>
<text transform="translate(311,650) scale(0.94,1)" font-size="13" fill="#1e6e1e" font-style="italic" text-anchor="start" font-weight="normal">445e</text>
<text transform="translate(385,650) scale(0.94,1)" font-size="13" fill="#111" font-style="italic" text-anchor="start" font-weight="normal">447</text>
<text transform="translate(416,650) scale(0.94,1)" font-size="13" fill="#111" font-style="italic" text-anchor="start" font-weight="normal">490a</text>
<text transform="translate(476,650) scale(0.94,1)" font-size="13" fill="#111" font-style="italic" text-anchor="start" font-weight="normal">485a</text>
<text transform="translate(500,650) scale(0.94,1)" font-size="13" fill="#111" font-style="italic" text-anchor="start" font-weight="normal">485</text>
<text transform="translate(548,650) scale(0.94,1)" font-size="13" fill="#111" font-style="italic" text-anchor="start" font-weight="normal">484</text>
<text transform="translate(578,650) scale(0.94,1)" font-size="13" fill="#111" font-style="italic" text-anchor="start" font-weight="normal">495a</text>
<text transform="translate(606,650) scale(0.94,1)" font-size="13" fill="#111" font-style="italic" text-anchor="start" font-weight="normal">496b</text>
<text transform="translate(638,650) scale(0.94,1)" font-size="13" fill="#111" font-style="italic" text-anchor="start" font-weight="normal">496a</text>
<text transform="translate(678,650) scale(0.94,1)" font-size="13" fill="#111" font-style="italic" text-anchor="start" font-weight="normal">459</text>
<text transform="translate(708,650) scale(0.94,1)" font-size="13" fill="#111" font-style="italic" text-anchor="start" font-weight="normal">496c</text>
<text transform="translate(730,650) scale(0.94,1)" font-size="13" fill="#111" font-style="italic" text-anchor="start" font-weight="normal">496b</text>
<text transform="translate(603,318) scale(0.94,1)" font-size="13" fill="#111" font-style="italic" text-anchor="start" font-weight="normal">813a</text>
<text transform="translate(633,318) scale(0.94,1)" font-size="13" fill="#111" font-style="italic" text-anchor="start" font-weight="normal">810b</text>
<text transform="translate(699,466) scale(0.94,1)" font-size="13" fill="#111" font-style="italic" text-anchor="start" font-weight="normal">637</text>
<text transform="translate(713,695) scale(0.94,1)" font-size="13" fill="#111" font-style="italic" text-anchor="start" font-weight="normal">308</text>
<text transform="translate(715,786) scale(0.94,1)" font-size="13" fill="#111" font-style="italic" text-anchor="start" font-weight="normal">313</text>
<text transform="translate(1063,318) scale(0.94,1)" font-size="13" fill="#111" font-style="italic" text-anchor="start" font-weight="normal">806</text>
<text transform="translate(1136,318) scale(0.94,1)" font-size="13" fill="#111" font-style="italic" text-anchor="start" font-weight="normal">807</text>
<text transform="translate(1343,318) scale(0.94,1)" font-size="13" fill="#111" font-style="italic" text-anchor="start" font-weight="normal">808</text>
<text transform="translate(1068,419) scale(0.94,1)" font-size="13" fill="#111" font-style="italic" text-anchor="start" font-weight="normal">704 - 720</text>
<text transform="translate(1068,466) scale(0.94,1)" font-size="13" fill="#111" font-style="italic" text-anchor="start" font-weight="normal">605 - 625</text>
<text transform="translate(1260,466) scale(0.94,1)" font-size="13" fill="#111" font-style="italic" text-anchor="start" font-weight="normal">629</text>
<text transform="translate(1402,466) scale(0.94,1)" font-size="13" fill="#111" font-style="italic" text-anchor="start" font-weight="normal">639</text>
<text transform="translate(1436,466) scale(0.94,1)" font-size="13" fill="#111" font-style="italic" text-anchor="start" font-weight="normal">630</text>
<text transform="translate(1240,503) scale(0.94,1)" font-size="13" fill="#111" font-style="italic" text-anchor="start" font-weight="normal">526</text>
<text transform="translate(1274,503) scale(0.94,1)" font-size="13" fill="#111" font-style="italic" text-anchor="start" font-weight="normal">530</text>
<text transform="translate(1308,503) scale(0.94,1)" font-size="13" fill="#111" font-style="italic" text-anchor="start" font-weight="normal">530b</text>
<text transform="translate(1340,503) scale(0.94,1)" font-size="13" fill="#111" font-style="italic" text-anchor="start" font-weight="normal">529</text>
<text transform="translate(1396,503) scale(0.94,1)" font-size="13" fill="#111" font-style="italic" text-anchor="start" font-weight="normal">531a</text>
<text transform="translate(1037,556) scale(0.94,1)" font-size="13" fill="#111" font-style="italic" text-anchor="start" font-weight="normal">509</text>
<text transform="translate(1075,541) scale(0.94,1)" font-size="13" fill="#111" font-style="italic" text-anchor="start" font-weight="normal">508</text>
<text transform="translate(1035,650) scale(0.94,1)" font-size="13" fill="#111" font-style="italic" text-anchor="start" font-weight="normal">410a</text>
<text transform="translate(1247,650) scale(0.94,1)" font-size="13" fill="#111" font-style="italic" text-anchor="start" font-weight="normal">428</text>
<text transform="translate(1384,650) scale(0.94,1)" font-size="13" fill="#111" font-style="italic" text-anchor="start" font-weight="normal">442</text>
<text transform="translate(1083,786) scale(0.94,1)" font-size="13" fill="#111" font-style="italic" text-anchor="start" font-weight="normal">226</text>
<text transform="translate(1129,786) scale(0.94,1)" font-size="13" fill="#111" font-style="italic" text-anchor="start" font-weight="normal">225</text>
<text transform="translate(1165,786) scale(0.94,1)" font-size="13" fill="#111" font-style="italic" text-anchor="start" font-weight="normal">221</text>
<text transform="translate(1245,786) scale(0.94,1)" font-size="13" fill="#111" font-style="italic" text-anchor="start" font-weight="normal">205</text>
<text transform="translate(1297,786) scale(0.94,1)" font-size="13" fill="#111" font-style="italic" text-anchor="start" font-weight="normal">205</text>
<text transform="translate(1399,786) scale(0.94,1)" font-size="13" fill="#111" font-style="italic" text-anchor="start" font-weight="normal">207</text>
<text transform="translate(1507,786) scale(0.94,1)" font-size="13" fill="#111" font-style="italic" text-anchor="start" font-weight="normal">208</text>
<text transform="translate(1538,125) scale(0.94,1)" font-size="13" fill="#111" font-style="italic" text-anchor="start" font-weight="normal">AS203</text>
<text transform="translate(1467,183) scale(0.94,1)" font-size="13" fill="#111" font-style="italic" text-anchor="start" font-weight="normal">Uteluft</text>
<text transform="translate(1465,201) scale(0.94,1)" font-size="13" fill="#111" font-style="italic" text-anchor="start" font-weight="normal">Daggpunkt</text>
<text transform="translate(271,519) scale(0.94,1)" font-size="13" fill="#111" font-style="italic" text-anchor="start" font-weight="normal">TA3</text>
<text transform="translate(330,519) scale(0.94,1)" font-size="13" fill="#111" font-style="italic" text-anchor="start" font-weight="normal">TA2</text>
<text transform="translate(459,527) scale(0.94,1)" font-size="13" fill="#111" font-style="italic" text-anchor="start" font-weight="normal">CA1501</text>
<text transform="translate(567,517) scale(0.94,1)" font-size="13" fill="#111" font-style="italic" text-anchor="start" font-weight="normal">LB1503</text>
<text transform="translate(685,517) scale(0.94,1)" font-size="13" fill="#111" font-style="italic" text-anchor="start" font-weight="normal">LB1502</text>
<text transform="translate(679,480) scale(0.94,1)" font-size="13" fill="#111" font-style="italic" text-anchor="start" font-weight="normal">LB1501</text>
<text transform="translate(650,347) scale(0.94,1)" font-size="13" fill="#111" font-style="italic" text-anchor="start" font-weight="normal">CA03</text>
<text transform="translate(1140,352) scale(0.94,1)" font-size="13" fill="#111" font-style="italic" text-anchor="start" font-weight="normal">TA4</text>
<text transform="translate(1256,354) scale(0.94,1)" font-size="13" fill="#111" font-style="italic" text-anchor="start" font-weight="normal">FF5</text>
<text transform="translate(1316,540) scale(0.94,1)" font-size="13" fill="#111" font-style="italic" text-anchor="start" font-weight="normal">TA6</text>
<text transform="translate(1400,527) scale(0.94,1)" font-size="13" fill="#111" font-style="italic" text-anchor="start" font-weight="normal">TA5</text>
<text transform="translate(451,823) scale(0.94,1)" font-size="13" fill="#111" font-style="italic" text-anchor="start" font-weight="normal">TA8</text>
<text transform="translate(1025,715) scale(0.94,1)" font-size="13" fill="#111" font-style="italic" text-anchor="start" font-weight="normal">CA10</text>
<text transform="translate(1026,762) scale(0.94,1)" font-size="13" fill="#111" font-style="italic" text-anchor="start" font-weight="normal">CA08</text>
<text transform="translate(1068,735) scale(0.94,1)" font-size="13" fill="#111" font-style="italic" text-anchor="start" font-weight="normal">LB1201</text>
<text transform="translate(1312,762) scale(0.94,1)" font-size="13" fill="#111" font-style="italic" text-anchor="start" font-weight="normal">CA01</text>
<text transform="translate(1456,742) scale(0.94,1)" font-size="13" fill="#111" font-style="italic" text-anchor="start" font-weight="normal">CA02</text>
<text transform="translate(1372,881) scale(0.94,1)" font-size="13" fill="#111" font-style="italic" text-anchor="start" font-weight="normal">CA07</text>
<text transform="translate(779,877) scale(0.94,1)" font-size="13" fill="#111" font-style="italic" text-anchor="start" font-weight="normal">CA04</text>
<text transform="translate(23,141) scale(0.94,1)" font-size="13" fill="#0c0ca8" font-style="italic" text-anchor="start" font-weight="normal">11.1 °C</text>
<text transform="translate(23,161) scale(0.94,1)" font-size="13" fill="#0c0ca8" font-style="italic" text-anchor="start" font-weight="normal">70 %</text>
<text transform="translate(23,181) scale(0.94,1)" font-size="13" fill="#0c0ca8" font-style="italic" text-anchor="start" font-weight="normal">5.71 g/Kg</text>
<text transform="translate(1530,141) scale(0.94,1)" font-size="13" fill="#0c0ca8" font-style="italic" text-anchor="start" font-weight="normal">10.4 °C</text>
<text transform="translate(1530,160) scale(0.94,1)" font-size="13" fill="#0c0ca8" font-style="italic" text-anchor="start" font-weight="normal">65.8 %</text>
<text transform="translate(1530,180) scale(0.94,1)" font-size="13" fill="#0c0ca8" font-style="italic" text-anchor="start" font-weight="normal">5.12 g/kg</text>
<text transform="translate(1530,200) scale(0.94,1)" font-size="13" fill="#0c0ca8" font-style="italic" text-anchor="start" font-weight="normal">4.3 °C</text>
<text transform="translate(893,451) scale(0.94,1)" font-size="13" fill="#0c0ca8" font-style="italic" text-anchor="middle" font-weight="normal">52.9 %</text>
<text transform="translate(893,469.5) scale(0.94,1)" font-size="13" fill="#0c0ca8" font-style="italic" text-anchor="middle" font-weight="normal">18.2 °C</text>
<text transform="translate(893,488) scale(0.94,1)" font-size="13" fill="#0c0ca8" font-style="italic" text-anchor="middle" font-weight="normal">631 ppm</text>
<text transform="translate(893,432.5) scale(0.94,1)" font-size="13" fill="#9a109a" font-style="italic" text-anchor="middle" font-weight="normal">52.8 %</text></g></svg><div class="panel"></div>
<div class="zb" style="left:1624px;top:109px;width:134px;">Max zoom</div>
<div class="zb" style="left:1775px;top:109px;width:135px;">Min zoom</div>
<div class="zb" style="left:1624px;top:149px;width:33px;font-size:18px;line-height:28px">+</div>
<div class="zb" style="left:1875px;top:149px;width:35px;font-size:18px;line-height:26px">-</div>
<div class="a" style="left:1666px;top:150px;width:204px;height:28px;background:#fff;border:1px solid #999"></div>
<div class="a" style="left:1667px;top:151px;width:16px;height:26px;border-right:1px solid #ccc;font-size:14px;text-align:center;line-height:24px;color:#333">&lsaquo;</div>
<div class="a" style="left:1836px;top:151px;width:17px;height:26px;background:#d8d8d8;border:1px solid #bbb"></div>
<div class="a" style="left:1853px;top:151px;width:16px;height:26px;font-size:14px;text-align:center;line-height:24px;color:#333">&rsaquo;</div>
<div class="a" style="left:1626px;top:193px;width:285px;height:152px;background:#fff;border:1px solid #111"></div>
<svg class="a" style="left:1626px;top:193px" width="285" height="151" viewBox="1626 193 285 151"><rect x="1626" y="193" width="285" height="151" fill="#fff"/><use href="#dg" transform="translate(1626.4,177.2) scale(0.176,0.1577)"/></svg>
<div class="a" style="left:1626px;top:193px;width:285px;height:152px;border:1px solid #111"></div>
<div class="a" style="left:1623px;top:190px;width:6px;height:6px;background:#000"></div>
<div class="a" style="left:1765px;top:190px;width:6px;height:6px;background:#000"></div>
<div class="a" style="left:1907px;top:190px;width:6px;height:6px;background:#000"></div>
<div class="a" style="left:1623px;top:265px;width:6px;height:6px;background:#000"></div>
<div class="a" style="left:1907px;top:265px;width:6px;height:6px;background:#000"></div>
<div class="a" style="left:1623px;top:341px;width:6px;height:6px;background:#000"></div>
<div class="a" style="left:1765px;top:341px;width:6px;height:6px;background:#000"></div>
<div class="a" style="left:1907px;top:341px;width:6px;height:6px;background:#000"></div>
<svg class="a" style="left:1615px;top:340px" width="130" height="105" viewBox="1615 340 130 105"><defs><linearGradient id="curl" x1="0" y1="0" x2="1" y2="1"><stop offset="0" stop-color="#9a9a9a"/><stop offset="0.6" stop-color="#e8e8e8"/><stop offset="1" stop-color="#fff"/></linearGradient></defs><polygon points="1620.7,368 1712.5,346.6 1731.4,419 1662.7,437.5 1632.5,421" fill="#fff"/><path d="M1632.5,421 Q1645,417 1656,417 L1662.7,437.5 Q1645,432 1632.5,421 Z" fill="url(#curl)"/><g fill="#c0c0c0"><polygon points="1677.5,368 1683,382 1679,382 1679,390 1676,390 1676,382 1672,382"/><polygon points="1677.5,419 1683,405 1679,405 1679,397 1676,397 1676,405 1672,405"/><polygon points="1651.7,393.4 1666,388 1666,392 1689,392 1689,395 1666,395 1666,399"/><polygon points="1701.6,393.4 1688,388 1688,399"/><rect x="1676" y="382" width="3" height="23"/></g><g transform="rotate(-25 1695 378)"><ellipse cx="1695" cy="378" rx="10" ry="13.5" fill="#fff" stroke="#111" stroke-width="1.2"/><path d="M1685.3,374 L1704.7,374" stroke="#111" stroke-width="1"/><path d="M1695,364.5 A10,13.5 0 0,1 1704.7,374 L1695,374 Z" fill="#aaa"/><ellipse cx="1690" cy="369" rx="1.6" ry="3" fill="none" stroke="#111" stroke-width="0.9"/></g><path d="M1702,391 Q1704,398 1707,397 Q1710,396 1711,391 Q1714,386 1722,388 L1724,389" fill="none" stroke="#111" stroke-width="1.1"/></svg>
<div class="a" style="left:1723px;top:441px;font-size:17px;font-weight:bold;text-decoration:underline;color:#111">Betjänar</div>
<div class="sb" style="left:1626px;top:470px">TA2</div>
<div class="sb2" style="left:1626px;top:501px;width:110px;height:24px">TA3</div>
<div class="dot" style="left:1742px;top:501px;background:#aaf5a8"></div>
<div class="sb2" style="left:1626px;top:532px;width:110px;height:24px">TA4</div>
<div class="dot" style="left:1742px;top:532px;background:#c8aee0"></div>
<div class="sb" style="left:1626px;top:562px">TA5</div>
<div class="sb" style="left:1626px;top:593px">TA6</div>
<div class="sb" style="left:1626px;top:624px">TA8</div>
<div class="sb2" style="left:1626px;top:655px;width:110px;height:24px">LB1501</div>
<div class="dot" style="left:1742px;top:655px;background:#fccab0"></div>
<div class="sb" style="left:1626px;top:686px">LB1502</div>
<div class="sb" style="left:1626px;top:716px">LB1503</div>
<div class="sb" style="left:1626px;top:747px">LB4201</div>
<div class="sb" style="left:1626px;top:778px">LV550</div>
<div class="sb2" style="left:1771px;top:470px;width:110px;height:24px">CA01</div>
<div class="dot" style="left:1887px;top:470px;background:#c5e8d6"></div>
<div class="sb2" style="left:1771px;top:501px;width:110px;height:24px">CA02</div>
<div class="dot" style="left:1887px;top:501px;background:#b0b0d0"></div>
<div class="sb2" style="left:1771px;top:532px;width:110px;height:24px">CA03</div>
<div class="dot" style="left:1887px;top:532px;background:#fdf0a8"></div>
<div class="sb" style="left:1771px;top:562px">CA04</div>
<div class="sb" style="left:1771px;top:593px">CA07</div>
<div class="sb2" style="left:1771px;top:624px;width:110px;height:24px">CA08</div>
<div class="dot" style="left:1887px;top:624px;background:#b0b2fc"></div>
<div class="sb2" style="left:1771px;top:655px;width:110px;height:24px">CA10</div>
<div class="dot" style="left:1887px;top:655px;background:#dcdcb0"></div>
<div class="sb2" style="left:1771px;top:686px;width:110px;height:24px">CA1501</div>
<div class="dot" style="left:1887px;top:686px;background:#e0bcac"></div>
<div class="sb" style="left:1771px;top:716px">FF1401</div>
<div class="sb" style="left:1771px;top:747px">FF3</div>
<div class="sb" style="left:1771px;top:778px">FF9</div>
<div class="sb" style="left:1771px;top:809px">FF14</div>
<div class="a" style="left:1632px;top:843px;width:271px;height:208px;background:#c0c0c0;border:1px solid #6a6a6a;overflow:hidden">
<div class="a" style="left:5px;top:1px;font-size:13.5px;line-height:18px;color:#111">CA01</div>
<div class="a" style="left:5px;top:19px;font-size:13.5px;line-height:18px;color:#111">CA02</div>
<div class="a" style="left:5px;top:37px;font-size:13.5px;line-height:18px;color:#111">CA03</div>
<div class="a" style="left:5px;top:55px;font-size:13.5px;line-height:18px;color:#111">CA04</div>
<div class="a" style="left:5px;top:73px;font-size:13.5px;line-height:18px;color:#111">CA07</div>
<div class="a" style="left:5px;top:91px;font-size:13.5px;line-height:18px;color:#111">CA1501</div>
<div class="a" style="left:5px;top:109px;font-size:13.5px;line-height:18px;color:#111">FF1401</div>
<div class="a" style="left:5px;top:127px;font-size:13.5px;line-height:18px;color:#111">FF3</div>
<div class="a" style="left:5px;top:145px;font-size:13.5px;line-height:18px;color:#111">FF9</div>
<div class="a" style="left:5px;top:163px;font-size:13.5px;line-height:18px;color:#111">LB1501</div>
<div class="a" style="left:5px;top:181px;font-size:13.5px;line-height:18px;color:#111">LB1502</div>
<div class="a" style="left:5px;top:199px;font-size:13.5px;line-height:18px;color:#111">LB1503</div>
</div>
<div class="a" style="left:1887px;top:844px;width:15px;height:206px;background:#fff"></div>
<div class="a" style="left:1887px;top:861px;width:15px;height:105px;background:#dcdcdc;border:1px solid #c8c8c8"></div>
<svg class="a" style="left:1887px;top:844px" width="16" height="206"><path d="M4,11 L8,7 L12,11" fill="none" stroke="#444" stroke-width="1.2"/><path d="M4,195 L8,199 L12,195" fill="none" stroke="#444" stroke-width="1.2"/><line x1="0" y1="172" x2="16" y2="172" stroke="#ddd"/></svg>
<div class="a" style="left:1890px;top:908px;width:9px;height:6px;border-top:1px solid #555;border-bottom:1px solid #555"></div>
<div class="a" style="left:1890px;top:911px;width:9px;height:1px;background:#555"></div><div class="a" style="left:0;top:1058px;width:1775px;height:104px;background:#e4e8ea"></div>
<div class="a" style="left:0;top:1059px;width:1765px;height:2px;background:#444"></div>
<div class="a" style="left:0;top:1061px;width:1765px;height:20px;background:linear-gradient(#ffffff,#d8d8d8)"></div>
<div class="a" style="left:0;top:1081px;width:1765px;height:2px;background:#444"></div>
<div class="a" style="left:0px;top:1061px;width:84px;height:20px;font-size:14px;font-weight:bold;text-align:center;line-height:19px;color:#111">Larmklass</div>
<div class="a" style="left:84px;top:1061px;width:56px;height:20px;font-size:14px;font-weight:bold;text-align:center;line-height:19px;color:#111">Status</div>
<div class="a" style="left:84px;top:1061px;width:1px;height:20px;background:#bbb"></div>
<div class="a" style="left:140px;top:1061px;width:357px;height:20px;font-size:14px;font-weight:bold;text-align:center;line-height:19px;color:#111">Larmtext</div>
<div class="a" style="left:140px;top:1061px;width:1px;height:20px;background:#bbb"></div>
<div class="a" style="left:497px;top:1061px;width:77px;height:20px;font-size:14px;font-weight:bold;text-align:center;line-height:19px;color:#111">Räknare</div>
<div class="a" style="left:497px;top:1061px;width:1px;height:20px;background:#bbb"></div>
<div class="a" style="left:574px;top:1061px;width:189px;height:20px;font-size:14px;font-weight:bold;text-align:center;line-height:19px;color:#111">Åttergått</div>
<div class="a" style="left:574px;top:1061px;width:1px;height:20px;background:#bbb"></div>
<div class="a" style="left:763px;top:1061px;width:189px;height:20px;font-size:14px;font-weight:bold;text-align:center;line-height:19px;color:#111">Variabel</div>
<div class="a" style="left:763px;top:1061px;width:1px;height:20px;background:#bbb"></div>
<div class="a" style="left:952px;top:1061px;width:119px;height:20px;font-size:14px;font-weight:bold;text-align:center;line-height:19px;color:#111">Kvitterat av</div>
<div class="a" style="left:952px;top:1061px;width:1px;height:20px;background:#bbb"></div>
<div class="a" style="left:1071px;top:1061px;width:154px;height:20px;font-size:14px;font-weight:bold;text-align:center;line-height:19px;color:#111">Kommentar</div>
<div class="a" style="left:1071px;top:1061px;width:1px;height:20px;background:#bbb"></div>
<div class="a" style="left:1225px;top:1061px;width:189px;height:20px;font-size:14px;font-weight:bold;text-align:center;line-height:19px;color:#111">Utlöst</div>
<div class="a" style="left:1225px;top:1061px;width:1px;height:20px;background:#bbb"></div>
<div class="a" style="left:1414px;top:1061px;width:168px;height:20px;font-size:14px;font-weight:bold;text-align:center;line-height:19px;color:#111">Senast utlöst</div>
<div class="a" style="left:1414px;top:1061px;width:1px;height:20px;background:#bbb"></div>
<div class="a" style="left:1582px;top:1061px;width:181px;height:20px;font-size:14px;font-weight:bold;text-align:center;line-height:19px;color:#111">Kvitterings tid</div>
<div class="a" style="left:1582px;top:1061px;width:1px;height:20px;background:#bbb"></div>
<div class="a" style="left:0;top:1083px;width:1765px;height:25px;background:#bebebe"></div>
<div class="a" style="left:0;top:1108px;width:1765px;height:25px;background:#efefef"></div>
<div class="a" style="left:84px;top:1083px;width:1px;height:50px;background:#777"></div>
<div class="a" style="left:140px;top:1083px;width:1px;height:50px;background:#777"></div>
<div class="a" style="left:497px;top:1083px;width:1px;height:50px;background:#777"></div>
<div class="a" style="left:574px;top:1083px;width:1px;height:50px;background:#777"></div>
<div class="a" style="left:763px;top:1083px;width:1px;height:50px;background:#777"></div>
<div class="a" style="left:952px;top:1083px;width:1px;height:50px;background:#777"></div>
<div class="a" style="left:1071px;top:1083px;width:1px;height:50px;background:#777"></div>
<div class="a" style="left:1225px;top:1083px;width:1px;height:50px;background:#777"></div>
<div class="a" style="left:1414px;top:1083px;width:1px;height:50px;background:#777"></div>
<div class="a" style="left:1582px;top:1083px;width:1px;height:50px;background:#777"></div>
<div class="a" style="left:5px;top:1085px;font-size:16px;line-height:22px;color:#ff1a1a;white-space:nowrap">B-Larm</div>
<div class="a" style="left:141px;top:1085px;font-size:16px;line-height:22px;color:#ff1a1a;white-space:nowrap">LVG- Fungerar inte</div>
<div class="a" style="left:499px;top:1085px;font-size:16px;line-height:22px;color:#fff;white-space:nowrap">2</div>
<div class="a" style="left:576px;top:1085px;font-size:16px;line-height:22px;color:#22dd22;white-space:nowrap">&lt;&lt;2016-10-28 09:44:35</div>
<div class="a" style="left:765px;top:1085px;font-size:16px;line-height:22px;color:#ff1a1a;white-space:nowrap">AB281001_LVG_LVGL</div>
<div class="a" style="left:1227px;top:1085px;font-size:16px;line-height:22px;color:#ff1a1a;white-space:nowrap">&gt;&gt;2016-10-28 08:09:59</div>
<div class="a" style="left:1415px;top:1085px;font-size:16px;line-height:22px;color:#22dd22;white-space:nowrap">2016-10-28 09:43:08</div>
<div class="a" style="left:5px;top:1110px;font-size:16px;line-height:22px;color:#111;white-space:nowrap">B-Larm</div>
<div class="a" style="left:141px;top:1110px;font-size:16px;line-height:22px;color:#111;white-space:nowrap">AS215 - Summalarm Nödljusagregatet</div>
<div class="a" style="left:499px;top:1110px;font-size:16px;line-height:22px;color:#111;white-space:nowrap">0</div>
<div class="a" style="left:765px;top:1110px;font-size:16px;line-height:22px;color:#111;white-space:nowrap">AB281001_TK_LA71SA</div>
<div class="a" style="left:1227px;top:1110px;font-size:16px;line-height:22px;color:#111;white-space:nowrap">&gt;&gt;2016-10-28 08:34:47</div>
<div class="a" style="left:102px;top:1084px;width:23px;height:23px;border-radius:50%;background:#22ee22;border:1px solid #222"></div>
<div class="a" style="left:102px;top:1109px;width:23px;height:23px;border-radius:50%;background:#ee1111;border:1px solid #222"></div>
<div class="a" style="left:0;top:1147px;width:1765px;height:2px;background:#555"></div>
<div class="a" style="left:0;top:1149px;width:1765px;height:11px;background:#f0f0f0;border-bottom:1px solid #999"></div>
<div class="a" style="left:11px;top:1150px;width:22px;height:9px;border:1px solid #aaa;background:#fafafa"></div>
<div class="a" style="left:1765px;top:1060px;width:10px;height:102px;background:#c8c8c8"></div>
<div class="a" style="left:1765px;top:1060px;width:10px;height:58px;background:#f6f6f6;border:1px solid #ccc"></div>
<div class="a" style="left:1765px;top:1118px;width:10px;height:18px;background:#fff;border:1px solid #bbb"></div>
<div class="a" style="left:1765px;top:1138px;width:10px;height:10px;background:#fff;border:1px solid #bbb"></div>
<div class="a" style="left:1775px;top:1060px;width:145px;height:102px;background:#bcc4c8"></div>
<div class="a" style="left:1777px;top:1062px;width:141px;height:34px;background:linear-gradient(#eef0f2,#c2cbd0);font-size:15px;text-align:center;line-height:30px;color:#111">Larmer</div>
<div class="a" style="left:1777px;top:1096px;width:141px;height:33px;background:linear-gradient(#c4c8ca,#b8c2c6);font-size:14px;text-align:center;line-height:30px;color:#8a8a8a">Kvittera alla</div>
<div class="a" style="left:1777px;top:1130px;width:141px;height:32px;background:linear-gradient(#c4c8ca,#b8c2c6);font-size:14px;text-align:center;line-height:30px;color:#8a8a8a">Kvittera</div>
<div class="a" style="left:0;top:1161px;width:1920px;height:37px;background:#e2e2e2"></div>
<div class="a" style="left:0;top:1198px;width:1920px;height:2px;background:#66c9ea"></div></body></html>
